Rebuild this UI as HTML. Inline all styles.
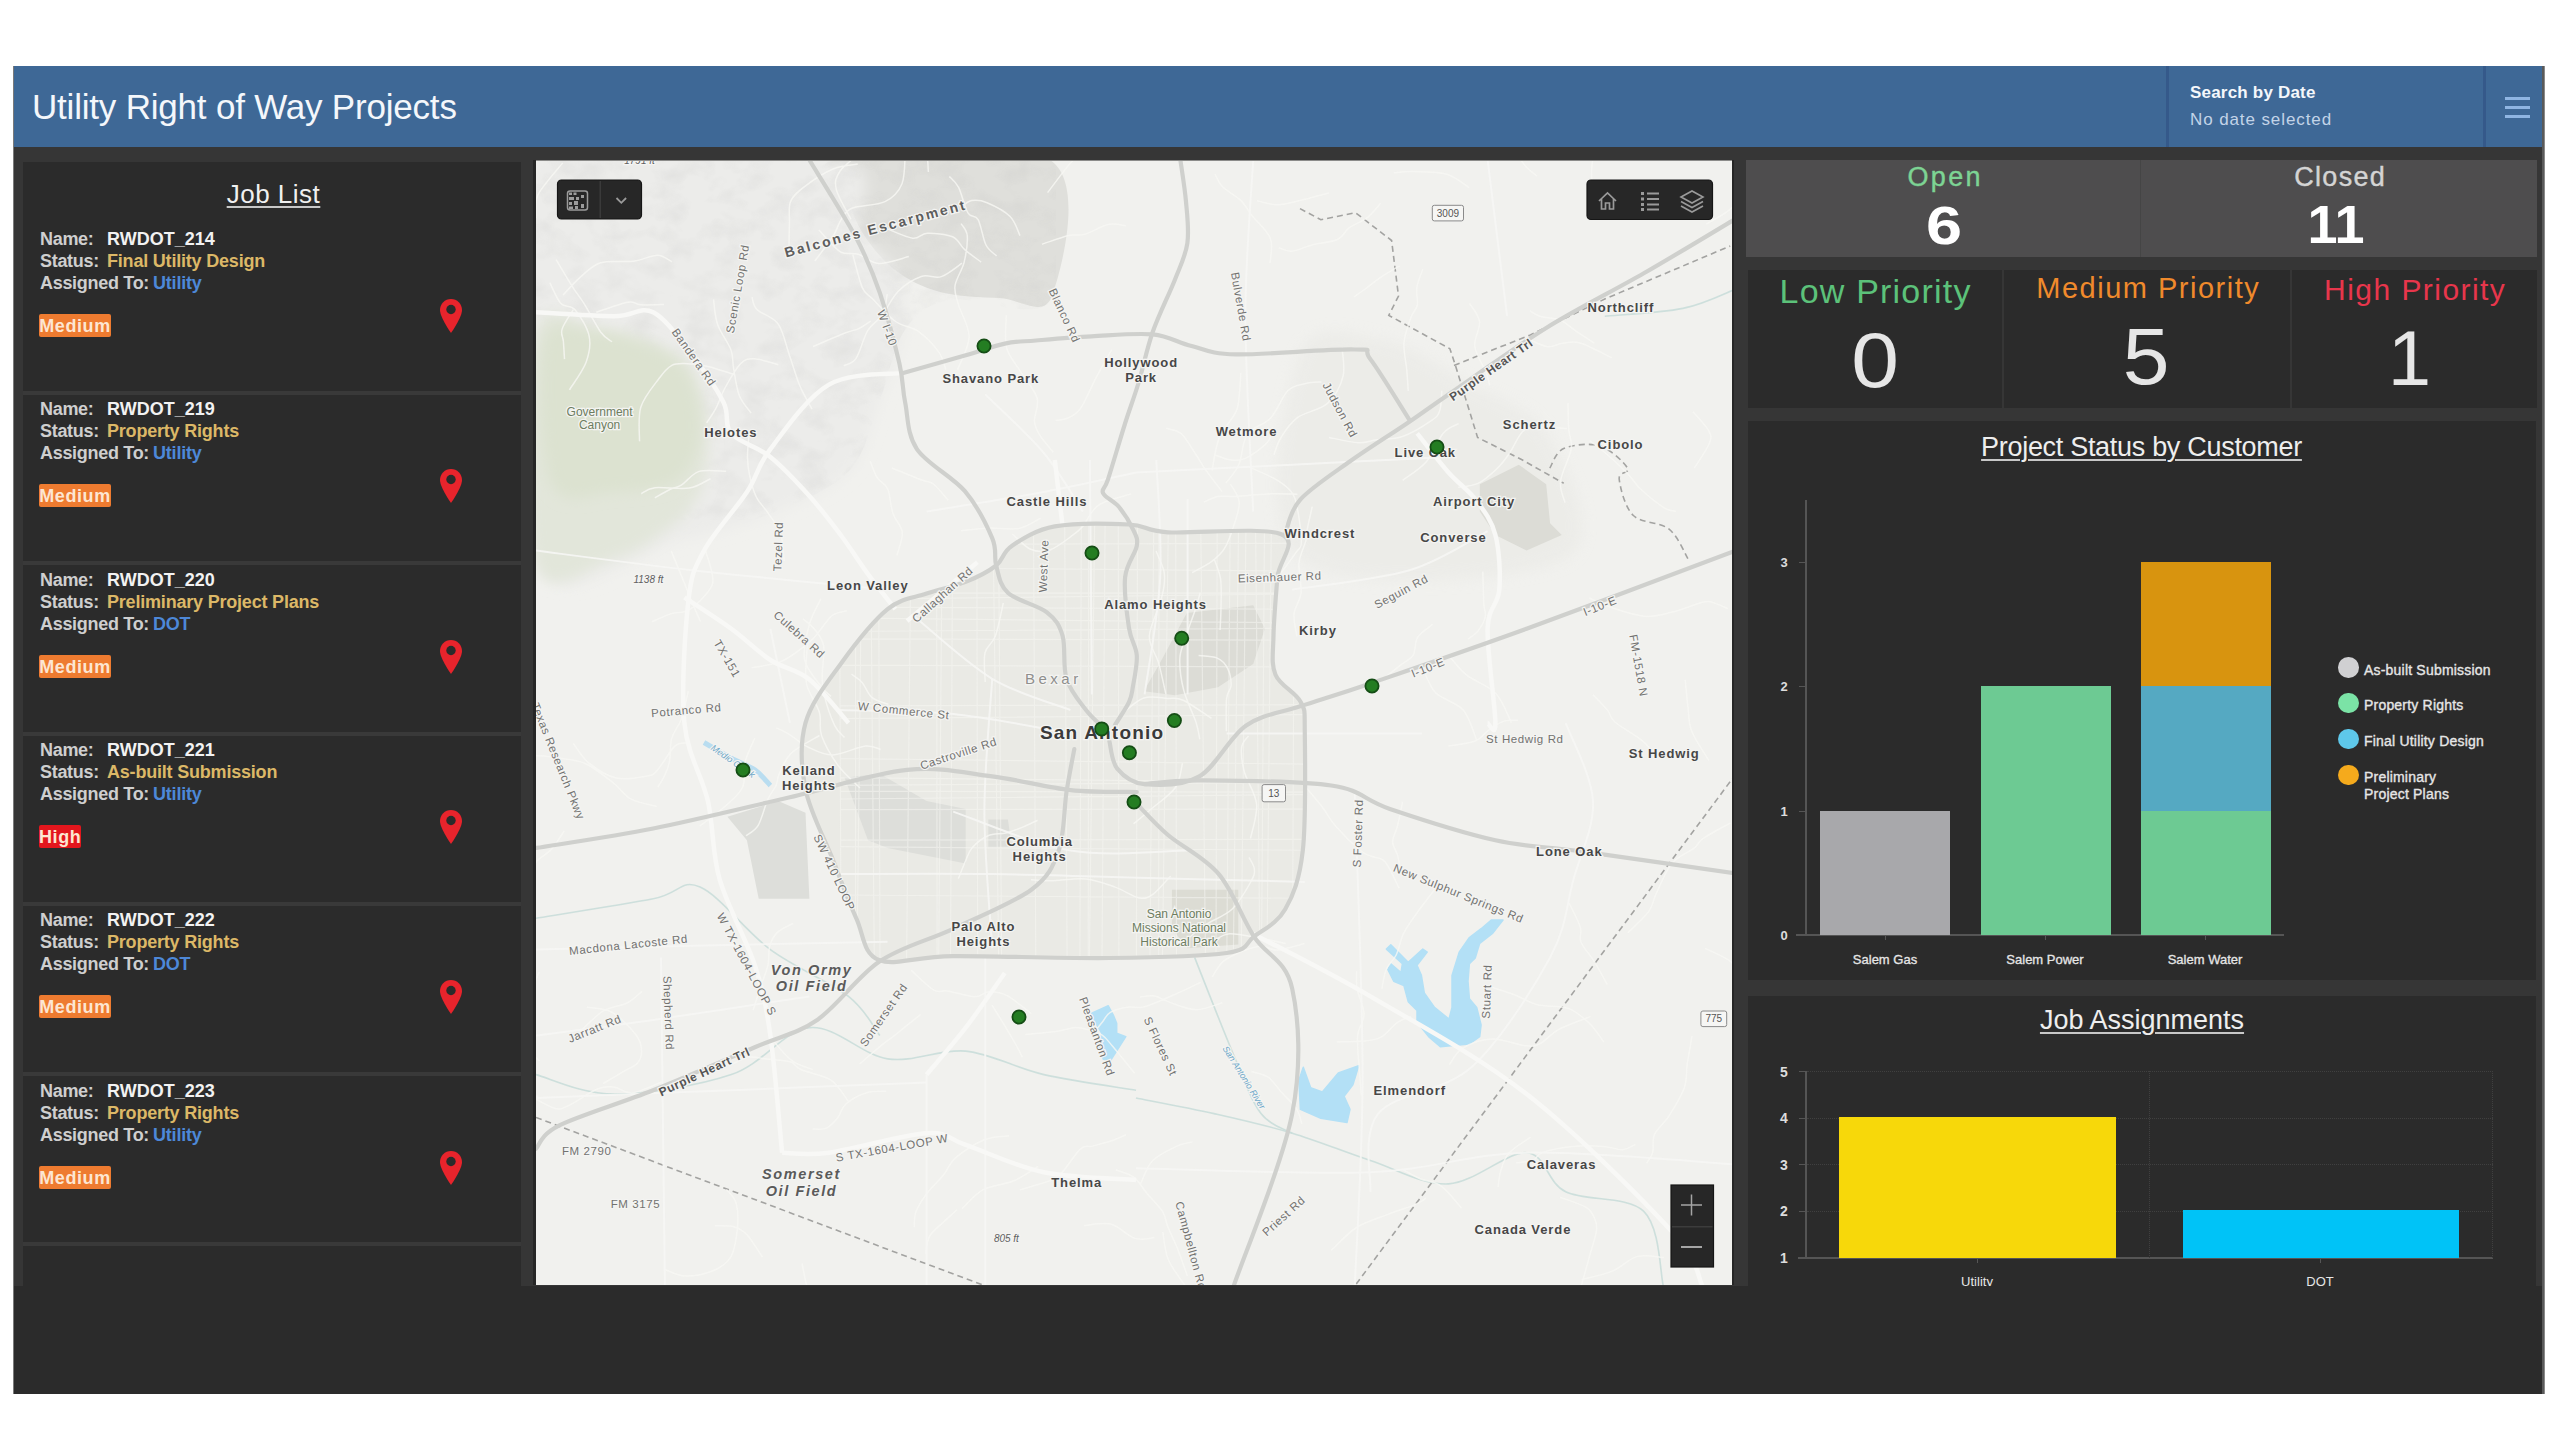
<!DOCTYPE html>
<html><head><meta charset="utf-8"><style>
html,body{margin:0;padding:0;background:#fff;width:2560px;height:1441px;overflow:hidden;position:relative;font-family:"Liberation Sans", sans-serif;}
.t{position:absolute;white-space:nowrap;line-height:1;}
.r{position:absolute;}
.badge{color:#fde6d2;font-size:18px;line-height:24px;text-align:center;font-weight:bold;letter-spacing:0.6px;border-radius:2px;}
u{text-decoration-thickness:1.6px;text-underline-offset:3px;text-decoration-color:#c8c8c8;}
</style></head><body>
<div class="r" style="left:13px;top:66px;width:2532px;height:1328px;background:#363636;"></div><div class="r" style="left:13px;top:66px;width:2532px;height:81px;background:#3e6896;"></div><div class="r" style="left:2166px;top:66px;width:3px;height:81px;background:#35598a;"></div><div class="r" style="left:2483px;top:66px;width:3px;height:81px;background:#35598a;"></div><div class="t" style="left:32px;top:88.9px;font-size:35px;color:#f4f7fb;font-weight:normal;letter-spacing:-0.2px;">Utility Right of Way Projects</div><div class="t" style="left:2190px;top:83.9px;font-size:17px;color:#f4f7fb;font-weight:bold;letter-spacing:0.2px;">Search by Date</div><div class="t" style="left:2190px;top:110.9px;font-size:17px;color:#c3d4e8;font-weight:normal;letter-spacing:0.9px;">No date selected</div><div class="r" style="left:2505px;top:97px;width:25px;height:3px;background:#8fb5e2;"></div><div class="r" style="left:2505px;top:106px;width:25px;height:3px;background:#8fb5e2;"></div><div class="r" style="left:2505px;top:115px;width:25px;height:3px;background:#8fb5e2;"></div><div class="r" style="left:23px;top:162px;width:498px;height:1124px;background:#2b2b2b;"></div><div class="t" style="left:-726.5px;width:2000px;text-align:center;top:181.4px;font-size:26px;color:#f0f0f0;font-weight:normal;letter-spacing:0.5px;"><u>Job List</u></div><div class="t" style="left:40px;top:230.1px;font-size:18px;color:#cfcfcf;font-weight:bold;letter-spacing:-0.3px;">Name:</div><div class="t" style="left:107px;top:230.1px;font-size:18px;color:#f2f2f2;font-weight:bold;letter-spacing:0px;">RWDOT_214</div><div class="t" style="left:40px;top:252.1px;font-size:18px;color:#cfcfcf;font-weight:bold;letter-spacing:-0.3px;">Status:</div><div class="t" style="left:107px;top:252.1px;font-size:18px;color:#dcb867;font-weight:bold;letter-spacing:-0.2px;">Final Utility Design</div><div class="t" style="left:40px;top:274.1px;font-size:18px;color:#cfcfcf;font-weight:bold;letter-spacing:-0.3px;">Assigned To:</div><div class="t" style="left:153px;top:274.1px;font-size:18px;color:#4d88d8;font-weight:bold;letter-spacing:-0.2px;">Utility</div><div class="r badge" style="left:39px;top:314px;width:72px;height:23px;background:#ee7b30;">Medium</div><svg class="r" style="left:439px;top:298.0px" width="24" height="36" viewBox="0 0 24 36"><path d="M12 1C5.9 1 1 5.9 1 12c0 7.5 11 23 11 23s11-15.5 11-23C23 5.9 18.1 1 12 1z" fill="#e8242c"/><circle cx="12" cy="11.5" r="4.7" fill="#2b2b2b"/></svg><div class="r" style="left:23px;top:391px;width:498px;height:4px;background:#393939;"></div><div class="t" style="left:40px;top:400.4px;font-size:18px;color:#cfcfcf;font-weight:bold;letter-spacing:-0.3px;">Name:</div><div class="t" style="left:107px;top:400.4px;font-size:18px;color:#f2f2f2;font-weight:bold;letter-spacing:0px;">RWDOT_219</div><div class="t" style="left:40px;top:422.4px;font-size:18px;color:#cfcfcf;font-weight:bold;letter-spacing:-0.3px;">Status:</div><div class="t" style="left:107px;top:422.4px;font-size:18px;color:#dcb867;font-weight:bold;letter-spacing:-0.2px;">Property Rights</div><div class="t" style="left:40px;top:444.4px;font-size:18px;color:#cfcfcf;font-weight:bold;letter-spacing:-0.3px;">Assigned To:</div><div class="t" style="left:153px;top:444.4px;font-size:18px;color:#4d88d8;font-weight:bold;letter-spacing:-0.2px;">Utility</div><div class="r badge" style="left:39px;top:484px;width:72px;height:23px;background:#ee7b30;">Medium</div><svg class="r" style="left:439px;top:468.3px" width="24" height="36" viewBox="0 0 24 36"><path d="M12 1C5.9 1 1 5.9 1 12c0 7.5 11 23 11 23s11-15.5 11-23C23 5.9 18.1 1 12 1z" fill="#e8242c"/><circle cx="12" cy="11.5" r="4.7" fill="#2b2b2b"/></svg><div class="r" style="left:23px;top:561px;width:498px;height:4px;background:#393939;"></div><div class="t" style="left:40px;top:570.7px;font-size:18px;color:#cfcfcf;font-weight:bold;letter-spacing:-0.3px;">Name:</div><div class="t" style="left:107px;top:570.7px;font-size:18px;color:#f2f2f2;font-weight:bold;letter-spacing:0px;">RWDOT_220</div><div class="t" style="left:40px;top:592.7px;font-size:18px;color:#cfcfcf;font-weight:bold;letter-spacing:-0.3px;">Status:</div><div class="t" style="left:107px;top:592.7px;font-size:18px;color:#dcb867;font-weight:bold;letter-spacing:-0.2px;">Preliminary Project Plans</div><div class="t" style="left:40px;top:614.7px;font-size:18px;color:#cfcfcf;font-weight:bold;letter-spacing:-0.3px;">Assigned To:</div><div class="t" style="left:153px;top:614.7px;font-size:18px;color:#4d88d8;font-weight:bold;letter-spacing:-0.2px;">DOT</div><div class="r badge" style="left:39px;top:655px;width:72px;height:23px;background:#ee7b30;">Medium</div><svg class="r" style="left:439px;top:638.6px" width="24" height="36" viewBox="0 0 24 36"><path d="M12 1C5.9 1 1 5.9 1 12c0 7.5 11 23 11 23s11-15.5 11-23C23 5.9 18.1 1 12 1z" fill="#e8242c"/><circle cx="12" cy="11.5" r="4.7" fill="#2b2b2b"/></svg><div class="r" style="left:23px;top:732px;width:498px;height:4px;background:#393939;"></div><div class="t" style="left:40px;top:741.0px;font-size:18px;color:#cfcfcf;font-weight:bold;letter-spacing:-0.3px;">Name:</div><div class="t" style="left:107px;top:741.0px;font-size:18px;color:#f2f2f2;font-weight:bold;letter-spacing:0px;">RWDOT_221</div><div class="t" style="left:40px;top:763.0px;font-size:18px;color:#cfcfcf;font-weight:bold;letter-spacing:-0.3px;">Status:</div><div class="t" style="left:107px;top:763.0px;font-size:18px;color:#dcb867;font-weight:bold;letter-spacing:-0.2px;">As-built Submission</div><div class="t" style="left:40px;top:785.0px;font-size:18px;color:#cfcfcf;font-weight:bold;letter-spacing:-0.3px;">Assigned To:</div><div class="t" style="left:153px;top:785.0px;font-size:18px;color:#4d88d8;font-weight:bold;letter-spacing:-0.2px;">Utility</div><div class="r badge" style="left:39px;top:825px;width:42px;height:23px;background:#e3161d;">High</div><svg class="r" style="left:439px;top:808.9px" width="24" height="36" viewBox="0 0 24 36"><path d="M12 1C5.9 1 1 5.9 1 12c0 7.5 11 23 11 23s11-15.5 11-23C23 5.9 18.1 1 12 1z" fill="#e8242c"/><circle cx="12" cy="11.5" r="4.7" fill="#2b2b2b"/></svg><div class="r" style="left:23px;top:902px;width:498px;height:4px;background:#393939;"></div><div class="t" style="left:40px;top:911.3px;font-size:18px;color:#cfcfcf;font-weight:bold;letter-spacing:-0.3px;">Name:</div><div class="t" style="left:107px;top:911.3px;font-size:18px;color:#f2f2f2;font-weight:bold;letter-spacing:0px;">RWDOT_222</div><div class="t" style="left:40px;top:933.3px;font-size:18px;color:#cfcfcf;font-weight:bold;letter-spacing:-0.3px;">Status:</div><div class="t" style="left:107px;top:933.3px;font-size:18px;color:#dcb867;font-weight:bold;letter-spacing:-0.2px;">Property Rights</div><div class="t" style="left:40px;top:955.3px;font-size:18px;color:#cfcfcf;font-weight:bold;letter-spacing:-0.3px;">Assigned To:</div><div class="t" style="left:153px;top:955.3px;font-size:18px;color:#4d88d8;font-weight:bold;letter-spacing:-0.2px;">DOT</div><div class="r badge" style="left:39px;top:995px;width:72px;height:23px;background:#ee7b30;">Medium</div><svg class="r" style="left:439px;top:979.2px" width="24" height="36" viewBox="0 0 24 36"><path d="M12 1C5.9 1 1 5.9 1 12c0 7.5 11 23 11 23s11-15.5 11-23C23 5.9 18.1 1 12 1z" fill="#e8242c"/><circle cx="12" cy="11.5" r="4.7" fill="#2b2b2b"/></svg><div class="r" style="left:23px;top:1072px;width:498px;height:4px;background:#393939;"></div><div class="t" style="left:40px;top:1081.6px;font-size:18px;color:#cfcfcf;font-weight:bold;letter-spacing:-0.3px;">Name:</div><div class="t" style="left:107px;top:1081.6px;font-size:18px;color:#f2f2f2;font-weight:bold;letter-spacing:0px;">RWDOT_223</div><div class="t" style="left:40px;top:1103.6px;font-size:18px;color:#cfcfcf;font-weight:bold;letter-spacing:-0.3px;">Status:</div><div class="t" style="left:107px;top:1103.6px;font-size:18px;color:#dcb867;font-weight:bold;letter-spacing:-0.2px;">Property Rights</div><div class="t" style="left:40px;top:1125.6px;font-size:18px;color:#cfcfcf;font-weight:bold;letter-spacing:-0.3px;">Assigned To:</div><div class="t" style="left:153px;top:1125.6px;font-size:18px;color:#4d88d8;font-weight:bold;letter-spacing:-0.2px;">Utility</div><div class="r badge" style="left:39px;top:1166px;width:72px;height:23px;background:#ee7b30;">Medium</div><svg class="r" style="left:439px;top:1149.5px" width="24" height="36" viewBox="0 0 24 36"><path d="M12 1C5.9 1 1 5.9 1 12c0 7.5 11 23 11 23s11-15.5 11-23C23 5.9 18.1 1 12 1z" fill="#e8242c"/><circle cx="12" cy="11.5" r="4.7" fill="#2b2b2b"/></svg><div class="r" style="left:23px;top:1242px;width:498px;height:4px;background:#393939;"></div><svg style="position:absolute;left:536px;top:160px" width="1196" height="1125" viewBox="536 160 1196 1125" font-family="Liberation Sans, sans-serif"><rect x="536" y="160" width="1196" height="1125" fill="#f1f1ee"/><path d="M996.2,565.5 C1003.8,559.5 1002.0,552.4 1011.8,545.9 C1021.5,539.4 1035.2,530.0 1054.8,526.4 C1074.3,522.8 1110.1,523.5 1129.0,524.5 C1147.8,525.4 1142.6,530.6 1168.0,532.3 C1193.4,533.9 1263.1,526.7 1281.3,534.2 C1299.5,541.7 1278.7,560.3 1277.4,577.2 C1276.1,594.1 1273.8,619.5 1273.5,635.8 C1273.2,652.1 1270.9,663.8 1275.5,674.8 C1280.0,685.9 1296.0,692.4 1300.8,702.2 C1305.7,712.0 1304.4,708.7 1304.8,733.4 C1305.1,758.2 1306.1,821.3 1302.8,850.6 C1299.5,879.9 1293.4,894.9 1285.2,909.2 C1277.1,923.5 1263.7,929.3 1254.0,936.6 C1244.2,943.9 1250.7,949.4 1226.6,953.0 C1202.5,956.5 1155.0,957.5 1109.4,958.0 C1063.9,958.6 991.6,955.8 953.2,956.1 C914.8,956.4 895.1,966.3 879.0,960.0 C862.8,953.7 864.0,935.0 856.3,918.3 C848.6,901.6 841.3,881.2 832.9,859.7 C824.4,838.2 810.1,812.2 805.5,789.4 C801.0,766.6 799.7,743.8 805.5,722.9 C811.4,702.0 827.0,682.9 840.7,663.9 C854.4,645.0 873.2,620.9 887.6,609.2 C901.9,597.5 913.6,598.2 926.6,593.6 C939.6,589.0 954.1,586.6 965.7,581.9 C977.3,577.2 988.5,571.5 996.2,565.5Z" fill="#eaeae5"/><path d="M1300.0,354.3 C1313.9,317.7 1355.5,335.8 1383.3,340.4 C1411.0,345.0 1438.8,365.8 1466.5,382.0 C1494.3,398.2 1533.6,407.9 1549.8,437.5 C1566.0,467.2 1605.3,539.5 1563.7,559.9 C1522.0,580.3 1343.9,594.2 1300.0,559.9 C1256.1,525.7 1286.1,390.9 1300.0,354.3Z" fill="#e9e9e5" opacity="0.6" filter="url(#bl6)"/><path d="M838.0,160.0 C872.2,155.0 1014.3,137.3 1050.0,160.0 C1085.7,182.7 1060.3,273.0 1052.0,296.0 C1043.7,319.0 1018.7,298.7 1000.0,298.0 C981.3,297.3 957.5,296.7 940.0,292.0 C922.5,287.3 908.0,280.0 895.0,270.0 C882.0,260.0 870.3,245.3 862.0,232.0 C853.7,218.7 849.0,202.0 845.0,190.0 C841.0,178.0 803.8,165.0 838.0,160.0Z" fill="#dfdfdb"/><defs><filter id="hs" x="0" y="0" width="1" height="1"><feTurbulence type="fractalNoise" baseFrequency="0.035 0.05" numOctaves="3" seed="4"/><feColorMatrix type="matrix" values="0 0 0 0 0.55  0 0 0 0 0.55  0 0 0 0 0.54  0 0 0 -2.2 1.25"/></filter></defs><path d="M536.0,160.0 C586.3,93.3 784.0,148.3 838.0,160.0 C892.0,171.7 849.7,210.8 860.0,230.0 C870.3,249.2 892.5,258.3 900.0,275.0 C907.5,291.7 908.3,309.2 905.0,330.0 C901.7,350.8 889.2,376.7 880.0,400.0 C870.8,423.3 866.7,451.7 850.0,470.0 C833.3,488.3 808.3,498.3 780.0,510.0 C751.7,521.7 720.7,531.7 680.0,540.0 C639.3,548.3 560.0,623.3 536.0,560.0 C512.0,496.7 485.7,226.7 536.0,160.0Z" fill="#ececea" filter="url(#bl6)"/><rect x="536" y="160" width="520" height="360" filter="url(#hs)" opacity="0.2" clip-path="url(#hsclip)"/><clipPath id="hsclip"><path d="M536.0,160.0 C621.7,93.3 964.0,136.7 1050.0,160.0 C1136.0,183.3 1068.7,276.7 1052.0,300.0 C1035.3,323.3 974.5,295.0 950.0,300.0 C925.5,305.0 916.7,313.3 905.0,330.0 C893.3,346.7 889.2,376.7 880.0,400.0 C870.8,423.3 866.7,451.7 850.0,470.0 C833.3,488.3 808.3,498.3 780.0,510.0 C751.7,521.7 720.7,531.7 680.0,540.0 C639.3,548.3 560.0,623.3 536.0,560.0 C512.0,496.7 450.3,226.7 536.0,160.0Z"/></clipPath><filter id="bl6" x="-20%" y="-20%" width="140%" height="140%"><feGaussianBlur stdDeviation="7"/></filter><path d="M536.0,331.9 C545.8,292.2 575.1,326.0 594.6,328.0 C614.1,329.9 636.9,336.4 653.2,343.6 C669.5,350.8 683.1,356.0 692.2,370.9 C701.4,385.9 706.6,413.3 707.9,433.4 C709.2,453.6 707.2,475.8 700.1,492.0 C692.9,508.3 679.2,520.0 664.9,531.1 C650.6,542.2 635.6,552.6 614.1,558.4 C592.6,564.3 549.0,604.0 536.0,566.2 C523.0,528.5 526.2,371.6 536.0,331.9Z" fill="#e2e6da" filter="url(#bl6)"/><path d="M543.8,339.7 C551.0,314.3 576.4,330.6 594.6,331.9 C612.8,333.2 637.6,340.3 653.2,347.5 C668.8,354.7 680.5,360.5 688.3,374.8 C696.2,389.2 702.0,415.9 700.1,433.4 C698.1,451.0 690.9,470.5 676.6,480.3 C662.3,490.1 635.0,491.4 614.1,492.0 C593.3,492.7 563.3,509.6 551.6,484.2 C539.9,458.8 536.7,365.1 543.8,339.7Z" fill="#dce2d0" filter="url(#bl6)"/><path d="M1143.8,691.2 L1159.4,663.9 L1186.8,613.1 L1253.2,605.3 L1264.9,628.8 L1253.2,663.9 L1218.0,687.3 L1175.1,695.2Z" fill="#dcdcd6"/><path d="M1479.8,484.2 L1518.8,464.7 L1546.2,484.2 L1550.1,523.3 L1561.8,535.0 L1526.6,550.6 L1495.4,535.0 L1479.8,511.6Z" fill="#dcdcd6"/><path d="M727.4,816.8 L778.2,801.1 L805.5,812.8 L809.4,898.8 L758.7,898.8 L746.9,840.2Z" fill="#dddeda"/><path d="M844.6,777.7 L879.8,773.8 L926.6,801.1 L965.7,808.9 L965.7,863.6 L887.6,848.0 L868.0,840.2Z" fill="#dddeda"/><path d="M1171.9,889.7 L1238.3,889.7 L1238.3,944.4 L1187.6,948.3 L1171.9,928.8Z" fill="#dcdcd4"/><path d="M988.3,819.4 L1007.9,819.4 L1011.8,846.7 L988.3,846.7Z" fill="#dddeda"/><path d="M1503.0,920.0 L1492.8,933.1 L1479.7,943.3 L1475.3,957.9 L1469.4,963.7 L1468.0,981.2 L1469.4,998.7 L1476.7,1007.4 L1481.1,1024.9 L1479.7,1036.6 L1469.4,1043.9 L1440.3,1046.8 L1428.6,1036.6 L1417.0,1022.0 L1417.0,1010.4 L1408.2,1001.6 L1403.9,985.6 L1393.7,981.2 L1387.8,969.5 L1390.8,963.7 L1401.0,972.5 L1402.4,963.7 L1386.4,949.1 L1390.8,944.8 L1408.2,962.3 L1422.8,949.1 L1427.2,952.1 L1417.0,965.2 L1421.4,975.4 L1424.3,992.9 L1434.5,1007.4 L1449.0,1019.1 L1452.0,1007.4 L1452.0,975.4 L1459.2,952.1 L1469.4,937.5 L1481.1,928.7 L1491.3,920.0Z" fill="#b3e0f6" stroke="#b3e0f6" stroke-width="1.5" stroke-linejoin="round"/><path d="M1303.3,1067.2 L1310.6,1087.6 L1322.3,1092.0 L1338.3,1073.0 L1358.7,1065.7 L1352.9,1084.7 L1344.1,1096.3 L1350.0,1109.4 L1347.0,1122.6 L1320.8,1118.2 L1300.4,1109.4 L1298.9,1080.3Z" fill="#b3e0f6" stroke="#b3e0f6" stroke-width="1.5" stroke-linejoin="round"/><path d="M1091.7,1013.3 L1108.3,1005.8 L1113.3,1015.0 L1116.7,1023.3 L1116.7,1033.3 L1125.8,1036.7 L1118.3,1048.3 L1110.8,1060.0 L1103.3,1059.2 L1099.2,1046.7 L1101.7,1033.3 L1095.0,1021.7Z" fill="#b3e0f6" stroke="#b3e0f6" stroke-width="1.5" stroke-linejoin="round"/><path d="M704.0,742.5 C708.5,745.1 722.8,753.6 731.3,758.2 C739.8,762.7 748.2,765.3 754.8,769.9 C761.3,774.4 767.8,782.9 770.4,785.5" fill="none" stroke="#b9ddf0" stroke-width="5"/><path d="M536.0,1074.6 C549.0,1077.8 581.6,1094.1 614.1,1094.1 C646.7,1094.1 698.8,1085.6 731.3,1074.6 C763.9,1063.5 783.4,1030.3 809.4,1027.7 C835.5,1025.1 861.5,1055.0 887.6,1058.9 C913.6,1062.8 939.6,1048.5 965.7,1051.1 C991.7,1053.7 1015.4,1068.1 1043.8,1074.6 C1072.2,1081.1 1120.6,1087.6 1136.0,1090.2" fill="none" stroke="#c9ddd9" stroke-width="1.6" opacity="0.9"/><path d="M1136.0,1098.0 C1149.0,1100.6 1188.1,1107.8 1214.1,1113.6 C1240.2,1119.5 1266.2,1125.3 1292.2,1133.2 C1318.3,1141.0 1344.3,1152.0 1370.4,1160.5 C1396.4,1169.0 1422.5,1185.2 1448.5,1183.9 C1474.5,1182.6 1507.1,1151.4 1526.6,1152.7 C1546.2,1154.0 1546.2,1182.0 1565.7,1191.8 C1585.2,1201.5 1627.5,1195.6 1643.8,1211.3 C1660.1,1227.0 1660.1,1273.5 1663.3,1285.9" fill="none" stroke="#c9ddd9" stroke-width="1.6" opacity="0.9"/><path d="M1194.6,957.4 C1201.1,973.7 1222.6,1029.0 1233.7,1055.0 C1244.7,1081.1 1251.2,1100.6 1261.0,1113.6 C1270.8,1126.6 1287.0,1129.9 1292.2,1133.2" fill="none" stroke="#c9ddd9" stroke-width="1.6" opacity="0.9"/><path d="M536.0,918.3 C555.5,915.1 625.8,904.0 653.2,898.8 C680.5,893.6 680.5,878.6 700.1,887.1 C719.6,895.5 745.6,931.3 770.4,949.6 C795.1,967.8 830.3,982.1 848.5,996.4 C866.7,1010.8 874.5,1029.0 879.8,1035.5" fill="none" stroke="#c9ddd9" stroke-width="1.6" opacity="0.9"/><path d="M1736.0,288.9 C1727.1,292.2 1704.8,303.9 1682.9,308.4 C1661.0,313.0 1617.8,314.9 1604.8,316.2" fill="none" stroke="#c9ddd9" stroke-width="1.6" opacity="0.9"/><path d="M536.0,1117.5 L985.2,1285.9" fill="none" stroke="#a3a3a1" stroke-width="1.6" stroke-dasharray="6 4"/><path d="M1736.0,773.8 L1354.8,1285.9" fill="none" stroke="#a3a3a1" stroke-width="1.6" stroke-dasharray="6 4"/><path d="M1300.0,208.6 L1320.8,219.7 L1355.5,212.7 L1391.6,240.5 L1398.5,296.0 L1388.8,315.4 L1419.3,332.1 L1449.9,348.7 L1455.4,365.4 L1466.5,401.5 L1477.6,437.5 L1522.0,459.8 L1563.7,483.3" fill="none" stroke="#a3a3a1" stroke-width="1.6" stroke-dasharray="6 4"/><path d="M1549.8,468.1 C1552.1,464.8 1555.3,452.3 1563.7,448.6 C1572.0,444.9 1589.1,442.6 1599.8,445.9 C1610.4,449.1 1624.3,462.5 1627.5,468.1 C1630.7,473.6 1618.3,471.3 1619.2,479.2 C1620.1,487.0 1624.7,506.9 1633.1,515.3 C1641.4,523.6 1659.9,521.7 1669.1,529.1 C1678.4,536.6 1685.3,554.8 1688.6,559.9" fill="none" stroke="#a3a3a1" stroke-width="1.6" stroke-dasharray="6 4"/><path d="M1454.0,365.4 L1530.4,334.9 L1605.3,298.8 L1730.2,246.0" fill="none" stroke="#a3a3a1" stroke-width="1.6" stroke-dasharray="6 4"/><clipPath id="mapclip"><rect x="536" y="160" width="1196" height="1125"/></clipPath><clipPath id="ringclip"><path d="M996.2,565.5 C1003.8,559.5 1002.0,552.4 1011.8,545.9 C1021.5,539.4 1035.2,530.0 1054.8,526.4 C1074.3,522.8 1110.1,523.5 1129.0,524.5 C1147.8,525.4 1142.6,530.6 1168.0,532.3 C1193.4,533.9 1263.1,526.7 1281.3,534.2 C1299.5,541.7 1278.7,560.3 1277.4,577.2 C1276.1,594.1 1273.8,619.5 1273.5,635.8 C1273.2,652.1 1270.9,663.8 1275.5,674.8 C1280.0,685.9 1296.0,692.4 1300.8,702.2 C1305.7,712.0 1304.4,708.7 1304.8,733.4 C1305.1,758.2 1306.1,821.3 1302.8,850.6 C1299.5,879.9 1293.4,894.9 1285.2,909.2 C1277.1,923.5 1263.7,929.3 1254.0,936.6 C1244.2,943.9 1250.7,949.4 1226.6,953.0 C1202.5,956.5 1155.0,957.5 1109.4,958.0 C1063.9,958.6 991.6,955.8 953.2,956.1 C914.8,956.4 895.1,966.3 879.0,960.0 C862.8,953.7 864.0,935.0 856.3,918.3 C848.6,901.6 841.3,881.2 832.9,859.7 C824.4,838.2 810.1,812.2 805.5,789.4 C801.0,766.6 799.7,743.8 805.5,722.9 C811.4,702.0 827.0,682.9 840.7,663.9 C854.4,645.0 873.2,620.9 887.6,609.2 C901.9,597.5 913.6,598.2 926.6,593.6 C939.6,589.0 954.1,586.6 965.7,581.9 C977.3,577.2 988.5,571.5 996.2,565.5Z"/></clipPath><path d="M839.3,520 L841.1,960 M855.5,520 L855.6,960 M862.1,520 L857.0,960 M870.4,520 L874.3,960 M878.5,520 L880.0,960 M911.2,520 L906.6,960 M936.6,520 L937.1,960 M942.3,520 L938.7,960 M952.7,520 L950.5,960 M976.8,520 L977.7,960 M992.9,520 L998.7,960 M998.5,520 L1001.6,960 M1033.5,520 L1035.8,960 M1064.7,520 L1067.1,960 M1081.3,520 L1079.9,960 M1088.7,520 L1088.2,960 M1094.7,520 L1089.4,960 M1105.1,520 L1102.0,960 M1118.3,520 L1118.9,960 M1137.5,520 L1136.4,960 M1153.8,520 L1149.9,960 M1158.9,520 L1158.7,960 M1168.4,520 L1162.4,960 M1175.7,520 L1176.5,960 M1200.7,520 L1205.5,960 M1217.2,520 L1216.0,960 M1230.2,520 L1226.8,960 M1238.6,520 L1233.3,960 M1246.0,520 L1241.2,960 M1255.5,520 L1259.9,960 M1264.5,520 L1261.5,960 M1271.4,520 L1266.9,960 M1294.3,520 L1292.5,960 M1310.6,520 L1316.1,960 M840,520.1 L1310,520.6 M840,544.8 L1310,543.2 M840,567.3 L1310,571.1 M840,593.0 L1310,593.2 M840,599.4 L1310,593.8 M840,607.1 L1310,609.4 M840,617.8 L1310,623.1 M840,631.5 L1310,628.2 M840,638.8 L1310,640.3 M840,665.2 L1310,667.1 M840,705.9 L1310,704.7 M840,718.7 L1310,714.5 M840,758.5 L1310,764.2 M840,777.7 L1310,782.2 M840,785.3 L1310,782.3 M840,791.2 L1310,792.2 M840,799.0 L1310,794.6 M840,809.6 L1310,809.1 M840,840.1 L1310,839.4 M840,846.7 L1310,850.3 M840,895.0 L1310,898.3 M840,982.5 L1310,981.9 M840,990.3 L1310,985.2" stroke="#f6f6f2" stroke-width="1.2" opacity="0.55" fill="none" clip-path="url(#ringclip)"/><path d="M1336.7,1041.9 C1341.2,1041.8 1356.1,1041.9 1363.5,1041.1 C1370.8,1040.3 1375.1,1040.4 1380.9,1037.2 C1386.6,1034.0 1392.8,1025.5 1397.9,1022.1 C1402.9,1018.7 1408.8,1017.7 1411.0,1016.8 M1594.4,343.1 C1591.3,341.1 1581.8,335.0 1576.0,331.1 C1570.3,327.2 1565.6,322.3 1559.7,319.9 C1553.8,317.5 1545.7,318.0 1540.7,316.5 C1535.7,315.0 1531.5,311.7 1529.7,310.7 M1198.6,655.5 C1201.7,655.9 1212.4,656.0 1217.3,658.1 C1222.1,660.2 1225.3,663.9 1227.6,668.4 C1229.9,672.9 1231.2,680.3 1231.1,685.3 C1230.9,690.3 1227.4,690.8 1226.6,698.5 C1225.8,706.2 1226.4,725.9 1226.4,731.3 M753.1,1010.2 C754.4,1006.4 758.0,994.6 760.5,987.0 C763.0,979.5 766.5,971.7 768.0,964.9 C769.5,958.2 768.0,952.0 769.6,946.6 C771.1,941.1 773.5,936.2 777.4,932.4 C781.4,928.5 790.6,924.9 793.2,923.4 M556.1,259.6 C558.9,264.2 567.9,279.7 572.5,286.9 C577.1,294.2 579.1,295.7 583.8,303.2 C588.5,310.7 596.0,325.5 600.6,332.0 C605.3,338.4 610.1,340.1 612.0,341.8 M1166.2,428.2 C1168.7,429.2 1176.3,429.3 1181.4,433.8 C1186.4,438.4 1192.5,449.6 1196.5,455.5 C1200.6,461.5 1201.3,463.6 1205.5,469.6 C1209.8,475.6 1219.3,487.9 1222.0,491.6 M859.5,1064.1 C863.2,1061.0 875.5,1050.0 881.4,1045.3 C887.2,1040.5 887.9,1040.6 894.5,1035.5 C901.0,1030.3 916.2,1018.0 920.6,1014.5 M663.1,1081.3 C658.1,1083.2 640.9,1091.8 632.8,1092.8 C624.7,1093.8 620.4,1087.8 614.5,1087.2 C608.6,1086.6 604.9,1086.0 597.3,1089.0 C589.8,1091.9 576.5,1101.9 569.4,1105.1 C562.2,1108.3 562.1,1110.4 554.5,1108.2 C546.9,1106.0 528.9,1094.9 523.8,1092.2 M1537.0,176.0 C1535.3,174.6 1530.6,171.7 1526.8,167.6 C1523.0,163.4 1519.8,158.4 1514.3,151.0 C1508.8,143.7 1499.4,132.2 1493.8,123.5 C1488.1,114.8 1485.0,104.2 1480.3,99.0 C1475.6,93.8 1468.0,93.3 1465.6,92.2 M857.8,164.1 C853.7,164.9 842.5,165.0 833.6,168.8 C824.8,172.5 811.6,181.2 804.5,186.6 C797.3,192.1 793.1,195.5 790.6,201.4 C788.1,207.3 789.7,214.7 789.5,222.1 C789.2,229.5 789.1,241.7 789.0,245.7 M776.4,727.8 C778.6,729.0 784.8,731.7 790.0,734.8 C795.2,738.0 800.3,743.3 807.4,746.7 C814.5,750.0 822.9,755.0 832.6,754.9 C842.2,754.8 857.4,746.9 865.4,746.0 C873.4,745.1 878.1,748.9 880.6,749.5 M1603.8,1042.0 C1601.4,1039.0 1595.5,1029.1 1589.6,1023.5 C1583.6,1017.9 1576.8,1011.5 1568.1,1008.4 C1559.4,1005.3 1546.1,1007.0 1537.3,1004.8 C1528.6,1002.6 1523.7,998.3 1515.6,995.2 C1507.5,992.1 1493.3,987.9 1488.9,986.4 M1140.6,1183.6 C1142.6,1179.9 1146.4,1167.2 1152.3,1161.0 C1158.1,1154.8 1169.2,1149.8 1175.9,1146.6 C1182.7,1143.4 1189.8,1142.7 1192.6,1141.9 M573.3,309.7 C571.4,313.0 563.7,323.8 562.1,329.1 C560.4,334.4 563.0,336.5 563.4,341.5 C563.8,346.5 564.3,356.1 564.5,359.1 M851.5,674.1 C853.3,675.5 858.8,678.5 862.1,682.4 C865.5,686.3 867.4,693.7 871.8,697.3 C876.2,701.0 885.7,703.2 888.5,704.4 M1408.3,390.9 C1408.0,387.4 1407.5,378.2 1406.8,370.1 C1406.1,362.1 1403.3,351.3 1404.0,342.5 C1404.7,333.7 1408.8,323.6 1411.0,317.3 C1413.2,311.1 1416.3,310.1 1417.3,305.0 C1418.2,300.0 1415.9,293.2 1416.9,287.2 C1417.8,281.2 1421.8,272.2 1422.8,269.2 M1215.0,174.0 C1216.2,176.1 1218.0,182.0 1222.2,186.4 C1226.5,190.8 1235.9,195.6 1240.8,200.4 C1245.7,205.2 1246.8,209.0 1251.8,215.4 C1256.7,221.7 1267.3,230.5 1270.4,238.5 C1273.4,246.4 1270.1,259.0 1270.1,263.1 M908.8,256.6 C903.8,257.7 887.1,263.9 878.7,263.5 C870.3,263.2 864.6,256.1 858.4,254.3 C852.2,252.4 846.5,254.7 841.6,252.5 C836.8,250.4 832.9,245.1 829.1,241.3 C825.3,237.6 820.6,231.8 818.9,229.9 M1162.8,1231.8 C1163.7,1236.4 1164.4,1250.3 1168.3,1259.5 C1172.1,1268.7 1181.8,1280.6 1185.9,1286.9 C1190.1,1293.2 1188.1,1294.5 1193.0,1297.4 C1197.9,1300.2 1208.5,1302.1 1215.3,1303.9 C1222.1,1305.7 1230.8,1307.3 1233.8,1307.9 M704.3,547.0 C705.6,551.6 711.6,568.0 712.4,575.1 C713.3,582.2 713.5,583.8 709.6,589.6 C705.8,595.3 695.9,605.5 689.5,609.6 C683.1,613.6 677.5,611.6 671.2,613.6 C665.0,615.7 655.1,620.4 651.9,621.8 M1730.6,822.8 C1726.0,825.4 1709.1,834.3 1703.0,838.5 C1697.0,842.7 1699.3,844.0 1694.1,848.2 C1688.9,852.3 1678.4,855.6 1672.1,863.1 C1665.8,870.7 1660.1,885.5 1656.2,893.6 C1652.3,901.6 1653.6,904.8 1648.8,911.4 C1644.1,917.9 1631.3,929.3 1627.8,932.8 M1047.6,192.6 C1051.0,188.2 1061.5,173.9 1068.0,165.9 C1074.5,157.9 1083.3,152.8 1086.8,144.4 C1090.4,136.1 1088.9,125.4 1089.4,115.7 C1090.0,106.1 1089.3,94.3 1090.1,86.4 C1090.8,78.5 1095.7,76.4 1094.2,68.3 C1092.7,60.2 1083.2,42.8 1081.0,37.7 M688.3,691.2 C687.1,695.9 684.0,711.4 681.2,719.3 C678.4,727.2 673.7,731.4 671.7,738.4 C669.8,745.5 670.7,755.3 669.5,761.5 C668.4,767.6 666.7,771.1 664.7,775.4 C662.8,779.7 658.9,785.3 657.8,787.2 M1134.7,1073.3 C1131.0,1068.8 1118.0,1052.6 1112.6,1046.3 C1107.2,1039.9 1106.1,1037.9 1102.2,1035.2 C1098.3,1032.5 1093.6,1031.2 1089.1,1029.9 C1084.6,1028.7 1080.5,1027.4 1075.2,1027.6 C1070.0,1027.8 1065.9,1030.1 1057.6,1031.2 C1049.3,1032.4 1030.8,1034.0 1025.4,1034.6 M1432.6,624.4 C1430.1,626.5 1420.9,632.2 1417.6,637.3 C1414.4,642.5 1415.9,650.6 1413.2,655.2 C1410.5,659.7 1406.9,660.2 1401.5,664.4 C1396.1,668.7 1384.2,678.1 1380.7,680.8 M1568.0,403.0 C1568.1,407.4 1568.2,422.2 1568.8,429.8 C1569.3,437.4 1572.5,440.2 1571.2,448.8 C1569.8,457.4 1561.6,472.4 1560.5,481.4 C1559.5,490.4 1564.3,499.2 1565.0,502.7 M1449.4,1064.8 C1451.6,1062.0 1455.3,1052.6 1462.4,1048.3 C1469.6,1044.1 1481.5,1039.5 1492.0,1039.1 C1502.6,1038.7 1517.7,1045.1 1525.7,1045.8 C1533.7,1046.6 1534.5,1046.3 1540.1,1043.6 C1545.7,1040.8 1550.9,1033.7 1559.3,1029.2 C1567.7,1024.7 1585.3,1018.7 1590.5,1016.6 M1399.2,888.3 C1396.9,883.9 1389.8,867.2 1385.2,861.9 C1380.6,856.6 1375.6,858.2 1371.4,856.3 C1367.2,854.4 1365.9,855.3 1360.0,850.3 C1354.1,845.3 1342.1,833.6 1335.8,826.3 C1329.4,819.0 1327.4,813.6 1321.9,806.5 C1316.4,799.4 1306.1,787.6 1302.9,783.8 M654.9,497.9 C657.4,496.5 665.5,491.6 669.9,489.5 C674.3,487.4 676.4,488.1 681.3,485.1 C686.2,482.1 691.8,473.7 699.3,471.4 C706.8,469.1 721.7,471.3 726.1,471.3 M1593.0,694.7 C1595.4,697.3 1604.1,705.9 1607.7,710.4 C1611.3,714.9 1609.0,716.8 1614.6,721.7 C1620.2,726.6 1635.3,735.2 1641.3,739.9 C1647.4,744.6 1649.4,748.2 1651.0,749.9 M808.5,637.4 C808.2,640.6 806.8,649.1 806.5,657.0 C806.2,664.9 804.5,675.5 806.7,684.7 C808.8,693.9 816.9,703.8 819.4,712.3 C821.8,720.8 818.5,726.9 821.6,735.8 C824.8,744.7 832.0,757.1 838.3,765.8 C844.7,774.4 856.3,784.2 859.9,787.9 M812.0,409.1 C810.0,405.2 803.6,394.8 799.8,385.8 C796.1,376.7 793.0,365.2 789.3,354.9 C785.7,344.6 783.5,331.5 778.1,323.9 C772.7,316.4 761.3,313.9 756.9,309.4 C752.6,304.9 752.8,299.1 752.0,297.1 M564.3,830.6 C562.2,833.7 556.3,844.0 551.7,849.1 C547.1,854.2 540.0,857.0 536.7,861.2 C533.4,865.3 532.7,872.0 532.0,874.1 M734.1,374.5 C729.8,373.2 715.8,368.2 708.1,366.4 C700.3,364.6 693.7,363.8 687.6,363.7 C681.6,363.5 676.6,362.8 671.8,365.3 C667.1,367.8 664.1,371.5 659.0,378.5 C653.8,385.5 644.0,396.8 640.8,407.2 C637.6,417.7 639.8,435.7 639.5,441.4 M784.1,561.2 C783.5,556.5 783.2,541.3 780.5,533.2 C777.7,525.1 771.7,518.5 767.6,512.4 C763.6,506.3 759.2,503.0 756.2,496.7 C753.2,490.4 750.9,481.4 749.5,474.8 C748.0,468.2 747.6,463.7 747.5,457.2 C747.4,450.7 748.6,439.5 748.9,435.9 M985.2,682.1 C985.2,677.2 983.3,660.5 985.0,652.9 C986.7,645.2 992.4,644.3 995.4,636.0 C998.5,627.7 1002.0,608.4 1003.3,602.9 M1273.9,454.9 C1275.1,452.0 1277.0,443.7 1281.0,437.5 C1284.9,431.3 1289.6,423.5 1297.4,417.7 C1305.2,412.0 1320.2,410.0 1327.8,403.1 C1335.5,396.1 1340.7,385.3 1343.1,376.1 C1345.4,366.8 1342.2,352.4 1342.0,347.6 M1093.0,1033.4 C1094.6,1031.5 1099.7,1025.3 1102.6,1021.8 C1105.5,1018.3 1106.0,1014.8 1110.3,1012.4 C1114.7,1009.9 1123.0,1008.0 1128.6,1007.1 C1134.2,1006.2 1136.6,1008.9 1144.1,1006.9 C1151.6,1004.9 1164.1,999.1 1173.6,995.0 C1183.0,990.9 1196.2,984.4 1200.8,982.3 M1248.5,735.9 C1247.3,737.8 1242.3,741.4 1241.6,747.5 C1240.9,753.5 1241.9,762.5 1244.4,772.0 C1247.0,781.5 1255.6,793.3 1256.6,804.3 C1257.6,815.4 1251.5,832.8 1250.5,838.5 M852.8,254.6 C854.4,260.1 859.1,280.2 862.3,287.6 C865.6,295.0 866.9,293.1 872.5,298.7 C878.0,304.4 888.1,316.1 895.6,321.5 C903.2,326.9 910.9,326.1 918.0,331.2 C925.2,336.3 934.2,345.7 938.8,352.1 C943.4,358.5 944.7,366.6 945.9,369.5 M870.2,461.1 C871.3,463.8 874.1,472.8 877.0,477.4 C879.9,482.1 884.9,482.8 887.6,488.8 C890.3,494.8 890.5,506.2 893.0,513.5 C895.4,520.8 901.6,525.4 902.3,532.4 C902.9,539.4 897.8,551.6 896.9,555.5 M812.7,1069.5 C809.2,1068.0 798.6,1065.9 791.7,1060.4 C784.7,1055.0 774.8,1042.9 771.1,1036.8 C767.3,1030.8 769.6,1026.2 769.3,1024.0 M887.2,294.1 C886.5,297.5 886.0,308.1 882.7,314.2 C879.4,320.3 872.2,323.4 867.7,330.7 C863.3,338.1 860.1,352.4 856.1,358.3 C852.1,364.1 845.8,364.5 843.8,365.8 M1249.0,857.4 C1249.9,859.4 1254.1,865.2 1254.4,869.3 C1254.7,873.3 1254.6,875.1 1250.9,881.7 C1247.2,888.3 1239.9,901.8 1232.3,909.0 C1224.8,916.1 1212.9,919.9 1205.8,924.6 C1198.6,929.4 1192.2,935.1 1189.5,937.2 M1278.7,247.7 C1280.9,248.3 1286.2,251.6 1291.7,251.2 C1297.2,250.8 1304.2,247.1 1311.9,245.1 C1319.6,243.1 1331.8,242.1 1338.0,239.2 C1344.1,236.3 1344.1,231.6 1349.0,227.9 C1353.9,224.3 1362.3,221.4 1367.6,217.3 C1372.8,213.2 1378.3,205.6 1380.5,203.3 M1676.0,511.4 C1674.0,510.8 1670.1,511.5 1664.1,507.8 C1658.2,504.0 1646.5,494.7 1640.3,488.8 C1634.1,483.0 1633.2,479.2 1626.8,472.8 C1620.4,466.3 1608.2,455.4 1601.9,450.0 C1595.7,444.7 1591.6,442.2 1589.5,440.6 M671.8,261.8 C669.4,260.7 663.9,255.3 657.5,255.2 C651.1,255.1 643.0,259.9 633.6,261.2 C624.1,262.4 609.7,259.9 600.7,262.8 C591.6,265.6 585.6,272.7 579.3,278.1 C573.0,283.5 565.7,292.3 563.0,295.1 M710.5,478.7 C706.9,480.3 698.4,486.6 689.2,488.1 C679.9,489.6 662.9,486.8 654.9,487.7 C647.0,488.6 643.5,492.7 641.3,493.7 M1663.9,1257.5 C1659.5,1257.3 1645.8,1254.1 1637.3,1256.4 C1628.8,1258.6 1622.2,1267.0 1612.9,1270.9 C1603.6,1274.8 1586.8,1278.2 1581.6,1279.7 M1301.8,1123.7 C1300.9,1121.1 1299.6,1113.6 1296.3,1108.4 C1293.0,1103.3 1286.6,1098.0 1281.9,1092.8 C1277.2,1087.6 1273.3,1080.7 1268.2,1077.2 C1263.1,1073.6 1254.2,1072.5 1251.4,1071.5 M1403.0,1169.5 C1405.8,1171.0 1413.7,1175.9 1420.1,1178.7 C1426.5,1181.5 1434.4,1181.2 1441.3,1186.1 C1448.2,1191.1 1458.2,1204.5 1461.5,1208.2 M1312.2,506.7 C1311.4,510.4 1308.5,522.8 1307.4,528.5 C1306.4,534.2 1307.2,535.1 1305.8,540.9 C1304.4,546.7 1299.7,554.5 1299.0,563.2 C1298.2,571.8 1301.9,584.2 1301.1,592.6 C1300.3,601.1 1294.7,606.7 1294.0,614.0 C1293.4,621.4 1296.5,632.9 1297.0,636.7 M664.1,304.5 C660.1,304.6 646.5,305.2 640.5,304.8 C634.4,304.4 635.2,300.9 627.8,302.2 C620.4,303.4 601.5,310.6 596.2,312.3 M911.2,970.4 C915.0,973.7 927.8,986.8 933.9,990.2 C939.9,993.6 940.6,989.8 947.4,990.9 C954.2,992.0 967.8,996.6 974.7,996.8 C981.6,996.9 983.5,992.0 988.9,991.8 C994.3,991.6 1000.0,992.0 1007.1,995.6 C1014.2,999.3 1027.3,1010.7 1031.4,1013.7 M1356.6,971.2 C1356.7,974.2 1355.8,981.9 1357.1,989.0 C1358.3,996.2 1364.1,1006.4 1364.1,1014.1 C1364.2,1021.9 1358.4,1026.4 1357.6,1035.7 C1356.8,1045.0 1358.7,1059.9 1359.4,1069.8 C1360.0,1079.8 1361.0,1091.1 1361.4,1095.4 M1272.6,427.1 C1271.7,429.6 1272.1,436.7 1267.6,442.0 C1263.1,447.2 1251.7,455.4 1245.4,458.4 C1239.0,461.4 1234.5,460.3 1229.5,459.7 C1224.6,459.2 1217.9,455.9 1215.6,455.2 M1170.7,875.9 C1167.8,878.9 1158.4,890.4 1153.2,894.1 C1147.9,897.8 1145.6,899.1 1139.3,897.9 C1132.9,896.8 1124.0,890.3 1115.1,887.1 C1106.2,883.9 1096.5,879.9 1085.9,878.9 C1075.2,877.8 1060.3,880.7 1051.2,880.8 C1042.0,880.9 1034.3,879.9 1030.9,879.7 M1450.5,657.6 C1453.2,660.5 1459.2,669.2 1466.7,675.1 C1474.2,681.1 1488.2,685.3 1495.7,693.3 C1503.2,701.2 1508.8,717.8 1511.5,722.7 M1607.3,984.7 C1605.2,980.9 1598.9,968.9 1594.5,961.8 C1590.2,954.7 1583.4,948.0 1581.0,942.2 C1578.6,936.5 1582.3,933.8 1580.3,927.2 C1578.3,920.6 1570.8,906.8 1568.9,902.7 M562.7,162.9 C560.1,166.1 551.5,175.9 547.2,181.6 C542.9,187.4 538.8,191.5 536.9,197.6 C535.1,203.6 536.0,214.6 535.8,218.0 M1526.9,338.5 C1530.3,339.8 1541.7,345.9 1547.6,346.7 C1553.6,347.5 1557.0,343.8 1562.6,343.2 C1568.1,342.6 1572.5,340.8 1580.8,343.2 C1589.0,345.6 1606.6,355.3 1611.8,357.7 M603.1,1083.5 C606.6,1081.5 618.0,1074.7 623.7,1071.4 C629.4,1068.0 634.3,1066.7 637.3,1063.2 C640.2,1059.7 641.8,1055.2 641.6,1050.5 C641.4,1045.9 641.1,1041.5 636.3,1035.2 C631.4,1028.8 620.6,1017.2 612.3,1012.5 C604.1,1007.8 591.0,1008.1 586.8,1007.2 M1321.5,381.9 C1318.9,382.2 1311.2,382.2 1305.6,383.6 C1300.0,385.1 1293.8,384.8 1288.0,390.5 C1282.2,396.2 1277.4,410.7 1270.6,417.9 C1263.8,425.2 1252.6,426.5 1247.3,434.2 C1242.0,442.0 1242.5,456.4 1238.9,464.5 C1235.3,472.7 1228.0,480.0 1225.9,483.1 M1423.1,669.0 C1425.2,673.0 1429.0,685.9 1435.6,692.8 C1442.3,699.6 1456.3,702.0 1463.2,710.0 C1470.1,718.0 1474.6,735.6 1476.9,740.8 M850.9,219.1 C848.5,214.1 838.1,197.4 836.3,189.4 C834.5,181.4 835.6,177.8 840.1,171.0 C844.6,164.2 858.8,156.0 863.5,148.4 C868.3,140.8 869.2,134.5 868.8,125.3 C868.3,116.1 861.6,101.4 861.0,93.4 C860.4,85.4 864.3,79.9 864.9,77.2 M726.4,1189.3 C728.0,1191.7 734.5,1196.9 736.3,1203.7 C738.1,1210.5 738.2,1221.4 737.2,1230.2 C736.3,1239.1 734.9,1250.0 730.9,1256.8 C726.8,1263.5 720.5,1267.6 712.9,1270.8 C705.3,1274.0 693.5,1276.3 685.4,1276.1 C677.3,1275.8 667.9,1270.4 664.4,1269.3 M1402.6,801.6 C1401.8,805.8 1399.0,819.8 1397.3,826.5 C1395.6,833.2 1392.5,836.9 1392.6,841.8 C1392.6,846.6 1396.3,850.6 1397.6,855.4 C1398.9,860.3 1399.9,868.3 1400.4,870.9 M1705.0,948.3 C1708.9,950.3 1721.2,955.0 1728.8,960.2 C1736.3,965.5 1742.3,975.9 1750.1,979.7 C1757.9,983.5 1766.1,982.8 1775.5,983.1 C1784.9,983.3 1801.1,981.5 1806.2,981.2 M1516.2,1162.7 C1519.0,1162.3 1528.4,1162.1 1532.8,1160.4 C1537.2,1158.7 1536.1,1154.7 1542.7,1152.4 C1549.4,1150.1 1562.7,1147.5 1572.8,1146.5 C1583.0,1145.5 1595.6,1145.9 1603.8,1146.4 C1612.0,1146.9 1616.9,1150.1 1622.1,1149.7 C1627.4,1149.4 1633.2,1145.3 1635.4,1144.4 M1441.8,390.6 C1441.5,393.9 1441.5,405.6 1439.8,410.6 C1438.1,415.6 1437.6,416.3 1431.3,420.6 C1425.1,424.9 1411.6,433.3 1402.5,436.5 C1393.4,439.7 1384.2,438.8 1376.9,439.8 C1369.5,440.9 1366.5,443.2 1358.5,442.8 C1350.5,442.4 1333.8,438.3 1328.9,437.4 M573.4,743.5 C575.9,746.6 581.3,756.8 588.4,762.6 C595.6,768.4 606.5,775.8 616.3,778.1 C626.0,780.3 640.2,777.4 647.1,776.1 C653.9,774.7 652.8,775.0 657.5,770.0 C662.1,765.0 669.9,750.6 674.8,746.1 C679.6,741.6 684.5,743.3 686.4,742.8 M1123.0,712.9 C1126.5,710.4 1136.4,700.4 1143.8,698.0 C1151.3,695.5 1161.1,698.0 1167.7,698.4 C1174.2,698.8 1175.9,697.0 1183.2,700.3 C1190.5,703.7 1206.8,715.4 1211.5,718.4 M812.9,346.5 C818.3,344.3 837.3,336.0 845.0,333.0 C852.6,330.0 854.4,330.6 858.7,328.6 C863.0,326.6 868.7,322.3 870.7,321.1 M1646.5,1163.3 C1647.5,1161.5 1651.3,1157.2 1652.7,1152.4 C1654.0,1147.5 1651.8,1140.5 1654.5,1134.4 C1657.2,1128.3 1664.0,1123.7 1669.0,1115.9 C1674.0,1108.0 1681.4,1095.9 1684.4,1087.4 C1687.4,1078.9 1685.9,1073.6 1687.1,1065.0 C1688.4,1056.4 1691.2,1040.9 1692.0,1036.0 M1436.6,887.1 C1433.4,891.3 1422.7,904.9 1417.3,912.5 C1411.8,920.2 1407.2,926.2 1403.7,933.2 C1400.2,940.3 1399.2,948.6 1396.3,954.7 C1393.4,960.7 1388.6,963.8 1386.2,969.5 C1383.8,975.1 1382.7,985.5 1381.9,988.7 M1304.7,943.6 C1300.1,944.7 1284.3,949.6 1277.2,950.0 C1270.2,950.5 1267.6,946.1 1262.2,946.2 C1256.8,946.2 1251.4,947.7 1244.9,950.2 C1238.5,952.7 1229.0,956.7 1223.6,961.1 C1218.1,965.6 1214.1,974.4 1212.2,977.0 M762.4,1257.0 C759.8,1253.3 751.8,1239.8 747.0,1234.7 C742.2,1229.6 739.1,1228.2 733.7,1226.7 C728.4,1225.2 717.9,1226.0 714.8,1225.8 M891.7,468.0 C896.7,470.0 914.8,477.4 921.8,480.0 C928.7,482.7 929.0,480.7 933.4,484.0 C937.8,487.4 945.8,497.5 948.3,500.2 M802.1,1263.5 C803.0,1267.7 804.9,1280.0 807.5,1288.8 C810.0,1297.6 816.5,1308.0 817.3,1316.1 C818.1,1324.2 813.2,1333.9 812.4,1337.5 M1222.5,1002.7 C1218.1,1003.9 1205.0,1009.7 1196.4,1009.7 C1187.7,1009.7 1177.5,1004.9 1170.6,1002.6 C1163.6,1000.3 1159.7,997.0 1154.6,996.1 C1149.5,995.2 1142.2,996.9 1139.8,997.0 M1053.3,452.3 C1051.1,449.5 1043.3,440.9 1040.1,435.7 C1037.0,430.5 1034.9,427.4 1034.4,421.2 C1033.9,414.9 1039.5,406.5 1037.1,398.2 C1034.8,389.9 1025.4,379.6 1020.3,371.2 C1015.3,362.8 1008.9,357.1 1006.6,347.8 C1004.2,338.4 1006.3,320.6 1006.3,315.2 M928.4,172.0 C927.8,167.9 928.5,155.8 925.1,147.7 C921.7,139.5 910.8,131.1 908.0,123.1 C905.2,115.0 908.2,103.1 908.2,99.1 M656.9,806.4 C652.6,805.2 638.4,803.0 631.2,799.1 C623.9,795.2 621.0,788.9 613.4,783.0 C605.8,777.1 594.8,767.8 585.7,763.7 C576.5,759.5 568.0,759.3 558.5,758.1 C549.1,756.9 539.1,754.1 529.0,756.5 C519.0,758.9 503.4,769.7 498.2,772.3 M961.1,223.7 C962.2,225.7 966.8,229.6 967.3,236.0 C967.7,242.4 966.1,253.9 964.1,262.3 C962.0,270.6 955.9,278.9 955.0,285.9 C954.1,293.0 956.1,296.1 958.4,304.6 C960.8,313.1 969.3,325.9 969.1,336.8 C969.0,347.6 959.5,364.2 957.5,369.7 M1685.2,679.9 C1685.6,684.3 1686.9,697.8 1687.9,706.3 C1689.0,714.8 1688.1,722.0 1691.6,731.0 C1695.1,740.0 1706.0,755.5 1708.9,760.5 M958.3,878.6 C959.5,875.7 963.2,866.4 965.4,861.3 C967.7,856.1 968.2,852.2 972.0,847.9 C975.7,843.6 982.4,838.2 988.0,835.7 C993.7,833.2 1000.2,834.3 1006.0,832.9 C1011.7,831.4 1017.5,829.2 1022.8,827.1 C1028.1,825.0 1035.1,821.3 1037.6,820.2 M539.2,972.0 C537.9,975.0 534.4,982.7 531.5,989.8 C528.5,996.8 522.1,1004.7 521.4,1014.1 C520.8,1023.5 524.6,1038.3 527.6,1046.2 C530.6,1054.0 537.4,1058.5 539.4,1061.0 M996.6,255.9 C994.8,254.1 989.1,251.0 986.0,245.0 C982.9,238.9 981.1,225.0 978.1,219.6 C975.1,214.3 971.1,218.2 967.9,212.8 C964.6,207.5 961.7,193.5 958.6,187.4 C955.5,181.3 950.9,178.2 949.3,176.4 M706.7,422.8 C708.2,420.5 712.5,414.7 715.7,408.7 C718.9,402.6 721.5,394.1 725.8,386.5 C730.0,379.0 736.3,367.9 741.0,363.3 C745.8,358.7 748.2,358.6 754.4,358.8 C760.6,359.1 774.3,363.7 778.3,364.7 M1297.4,494.2 C1292.5,494.1 1278.5,493.6 1268.3,493.9 C1258.1,494.3 1244.5,496.0 1236.1,496.4 C1227.7,496.9 1223.4,495.5 1218.0,496.5 C1212.6,497.4 1206.2,501.1 1203.9,502.0 M1125.7,225.8 C1122.8,225.5 1115.0,223.0 1108.1,224.5 C1101.2,225.9 1090.9,232.6 1084.3,234.4 C1077.7,236.2 1075.7,233.8 1068.6,235.5 C1061.6,237.1 1046.5,242.8 1042.0,244.2 M1131.1,493.9 C1125.8,495.8 1106.9,499.6 1098.9,504.9 C1090.8,510.3 1087.0,521.2 1082.8,526.2 C1078.5,531.1 1078.8,530.7 1073.4,534.7 C1068.0,538.6 1057.3,547.4 1050.2,549.8 C1043.1,552.3 1036.9,552.0 1030.6,549.3 C1024.3,546.7 1015.5,536.6 1012.4,534.0 M1115.7,1169.8 C1118.7,1171.0 1128.8,1173.3 1134.0,1177.3 C1139.2,1181.2 1142.0,1187.5 1146.8,1193.2 C1151.5,1198.9 1159.0,1205.7 1162.5,1211.4 C1166.0,1217.1 1165.6,1221.4 1168.0,1227.3 C1170.4,1233.3 1173.7,1239.0 1176.9,1247.1 C1180.2,1255.3 1185.7,1271.4 1187.5,1276.3 M886.3,1091.2 C883.0,1091.5 873.2,1090.7 866.4,1092.8 C859.7,1095.0 850.8,1099.8 845.9,1104.0 C841.1,1108.2 840.8,1114.1 837.5,1118.1 C834.3,1122.1 830.6,1126.3 826.4,1128.1 C822.3,1129.9 814.8,1128.9 812.5,1129.1 M1727.8,608.7 C1725.8,607.9 1719.7,604.7 1715.7,603.6 C1711.7,602.4 1711.0,600.6 1703.7,602.0 C1696.4,603.5 1681.8,609.8 1672.1,612.1 C1662.3,614.5 1655.0,617.0 1645.3,616.4 C1635.5,615.7 1622.7,611.4 1613.3,608.3 C1604.0,605.2 1593.3,599.7 1589.3,598.0 M1285.7,943.5 C1281.2,942.5 1268.2,939.6 1258.9,938.0 C1249.6,936.3 1237.0,933.3 1229.6,933.7 C1222.3,934.1 1217.3,939.2 1214.8,940.2 M580.2,1031.4 C584.1,1027.9 595.6,1015.6 603.4,1010.9 C611.2,1006.2 620.6,1006.2 627.0,1003.0 C633.5,999.7 639.5,993.3 642.0,991.3 M1040.5,518.3 C1036.8,520.0 1027.3,526.9 1018.7,528.5 C1010.1,530.1 998.5,527.7 988.9,528.0 C979.3,528.4 965.7,530.2 961.1,530.7 M1020.0,235.6 C1018.3,232.4 1015.6,222.0 1010.1,216.5 C1004.7,211.0 993.5,205.4 987.1,202.7 C980.7,200.1 976.1,199.9 971.8,200.6 C967.5,201.3 963.1,205.8 961.4,206.9 M1353.8,296.9 C1355.8,295.5 1361.5,291.7 1365.9,288.5 C1370.4,285.2 1375.0,281.2 1380.6,277.4 C1386.2,273.7 1396.5,267.7 1399.7,265.8 M1426.1,1198.2 C1424.1,1199.3 1420.4,1202.4 1414.0,1205.1 C1407.5,1207.8 1396.9,1210.8 1387.3,1214.6 C1377.7,1218.3 1365.8,1221.5 1356.5,1227.5 C1347.1,1233.5 1335.4,1246.7 1331.2,1250.5 M1393.8,172.8 C1397.0,172.6 1404.1,171.4 1412.9,171.6 C1421.8,171.9 1437.5,171.6 1446.9,174.2 C1456.2,176.9 1465.4,185.5 1469.1,187.8 M914.3,1227.4 C914.5,1224.8 913.9,1217.6 915.9,1212.1 C917.9,1206.6 921.5,1200.7 926.1,1194.5 C930.7,1188.3 938.8,1180.8 943.7,1174.7 C948.6,1168.6 948.9,1163.4 955.7,1157.6 C962.5,1151.8 975.4,1143.4 984.3,1139.8 C993.2,1136.1 1004.9,1136.4 1009.0,1135.8 M885.7,228.2 C890.2,229.9 905.7,237.3 912.6,238.2 C919.5,239.0 920.6,233.4 927.3,233.2 C933.9,233.0 946.2,234.1 952.5,236.8 C958.7,239.5 959.9,245.3 964.7,249.6 C969.5,253.8 978.4,260.0 981.1,262.1 M1458.6,423.6 C1456.1,425.2 1448.6,426.9 1443.2,433.2 C1437.8,439.6 1433.1,453.9 1426.3,461.8 C1419.6,469.6 1406.7,477.3 1402.7,480.3 M881.1,318.3 C883.9,313.8 891.3,298.6 898.0,291.6 C904.7,284.7 914.1,279.0 921.3,276.5 C928.5,274.0 934.5,278.9 941.3,276.6 C948.1,274.4 958.6,265.4 962.0,263.2 M1489.7,385.5 C1489.1,383.3 1488.6,379.1 1486.2,372.6 C1483.7,366.2 1476.0,355.2 1474.8,346.7 C1473.7,338.2 1480.4,328.9 1479.5,321.6 C1478.6,314.4 1471.2,306.4 1469.5,303.4 M1182.5,763.2 C1181.3,767.2 1180.6,779.8 1175.4,787.5 C1170.1,795.1 1158.2,803.0 1151.2,809.0 C1144.3,815.1 1136.6,821.3 1133.6,823.8 M1240.8,372.8 C1240.6,375.9 1240.4,385.0 1239.6,391.4 C1238.8,397.8 1239.5,403.6 1236.1,411.4 C1232.7,419.2 1223.1,428.3 1219.1,438.1 C1215.1,448.0 1213.3,465.2 1212.1,470.6 M1125.9,1134.7 C1123.6,1135.7 1117.2,1138.9 1111.6,1140.8 C1106.0,1142.7 1097.6,1144.7 1092.4,1146.1 C1087.2,1147.5 1085.9,1144.0 1080.3,1149.1 C1074.6,1154.1 1065.7,1170.2 1058.5,1176.2 C1051.3,1182.1 1043.4,1182.5 1037.0,1184.8 C1030.5,1187.1 1022.6,1189.0 1019.7,1189.9 M1467.9,639.2 C1469.6,637.8 1475.0,634.8 1477.9,631.1 C1480.8,627.3 1484.3,621.3 1485.3,616.7 C1486.2,612.1 1484.2,611.1 1483.8,603.6 C1483.4,596.1 1483.0,576.9 1482.8,571.6 M1084.1,1225.6 C1088.5,1225.3 1102.3,1221.9 1110.8,1224.1 C1119.3,1226.2 1127.8,1236.2 1135.1,1238.4 C1142.4,1240.7 1151.2,1237.7 1154.4,1237.6 M814.9,261.0 C818.0,256.8 829.1,242.4 833.5,235.5 C837.8,228.6 837.9,224.4 841.0,219.8 C844.1,215.3 844.7,211.2 852.0,208.2 C859.3,205.2 876.7,205.8 885.0,201.7 C893.3,197.6 898.6,192.3 902.0,183.8 C905.4,175.3 904.7,156.3 905.3,150.8 M844.5,737.5 C842.8,735.5 838.2,732.9 834.7,725.7 C831.3,718.4 825.9,702.3 823.8,693.9 C821.7,685.4 822.3,683.1 822.2,675.1 C822.2,667.0 824.9,653.4 823.6,645.7 C822.2,637.9 817.6,633.1 814.1,628.7 C810.7,624.2 804.8,620.5 803.0,618.8 M1111.7,349.6 C1109.0,354.4 1100.9,368.4 1095.8,378.1 C1090.8,387.7 1085.6,401.0 1081.1,407.6 C1076.7,414.2 1073.3,415.4 1069.1,417.5 C1064.8,419.7 1057.9,420.1 1055.6,420.6 M1275.9,579.7 C1279.2,575.3 1291.4,559.3 1295.7,552.9 C1299.9,546.6 1301.1,549.4 1301.4,541.8 C1301.6,534.3 1299.0,516.1 1297.2,507.7 C1295.5,499.3 1294.7,496.3 1291.0,491.5 C1287.3,486.7 1282.0,483.0 1274.9,478.9 C1267.8,474.8 1253.0,468.9 1248.6,466.9 M751.6,667.8 C754.5,667.3 764.0,665.9 769.4,664.6 C774.9,663.3 777.6,663.8 784.3,660.0 C791.0,656.2 803.8,646.8 809.8,641.8 C815.8,636.8 816.4,634.3 820.2,629.9 C824.0,625.4 828.3,618.3 832.7,615.2 C837.2,612.0 844.4,611.6 846.7,610.8 M1706.4,224.0 C1710.8,221.1 1726.1,214.2 1732.6,207.0 C1739.2,199.8 1740.2,186.7 1745.7,180.7 C1751.2,174.7 1760.1,174.8 1765.5,171.1 C1770.8,167.5 1775.8,160.9 1777.8,158.8 M820.8,598.9 C818.9,603.3 811.8,615.0 809.1,625.1 C806.4,635.2 802.7,649.3 804.5,659.3 C806.4,669.4 816.0,679.3 820.4,685.4 C824.8,691.6 829.2,694.6 831.0,696.4 M538.3,1096.3 C536.1,1096.3 530.6,1096.1 525.4,1096.6 C520.2,1097.2 514.6,1096.1 507.2,1099.5 C499.9,1103.0 488.1,1112.8 481.4,1117.3 C474.6,1121.9 469.3,1125.1 466.8,1126.7 M746.1,835.7 C748.1,834.0 754.6,831.3 758.2,825.3 C761.8,819.3 764.7,806.2 767.7,799.6 C770.7,792.9 774.1,789.8 776.1,785.4 C778.0,781.1 776.7,779.0 779.3,773.6 C781.8,768.2 784.7,759.4 791.5,753.0 C798.2,746.7 814.8,738.4 819.5,735.5 M1156.1,551.1 C1157.4,554.4 1162.6,565.2 1163.9,571.0 C1165.2,576.9 1164.6,580.7 1164.0,586.1 C1163.3,591.5 1162.5,595.0 1160.0,603.4 C1157.6,611.7 1149.6,626.4 1149.3,636.3 C1149.1,646.3 1155.8,653.3 1158.6,662.9 C1161.3,672.5 1164.6,688.7 1165.8,693.8 M962.0,1208.6 C965.5,1205.5 974.6,1194.4 983.2,1189.7 C991.8,1185.1 1004.7,1184.7 1013.8,1180.8 C1023.0,1176.9 1034.2,1168.7 1038.2,1166.3 M992.1,1005.2 C994.2,1008.6 1000.3,1018.4 1004.4,1025.2 C1008.5,1032.0 1013.6,1040.7 1016.6,1046.0 C1019.7,1051.3 1021.4,1055.2 1022.4,1057.1 M1693.0,411.7 C1695.7,414.9 1706.0,425.5 1708.8,430.8 C1711.5,436.1 1711.8,437.0 1709.4,443.2 C1707.0,449.4 1696.9,463.9 1694.3,468.0 M848.7,1102.0 C845.7,1098.3 839.0,1085.5 831.0,1080.1 C823.0,1074.7 807.5,1072.6 800.8,1069.5 C794.0,1066.5 795.9,1063.5 790.3,1061.8 C784.7,1060.0 774.0,1059.9 767.1,1059.1 C760.2,1058.4 755.1,1056.0 748.8,1057.1 C742.5,1058.2 732.5,1064.3 729.3,1065.7 M699.8,825.8 C702.8,823.5 711.0,818.5 718.0,812.3 C725.0,806.1 737.5,796.9 742.0,788.5 C746.5,780.2 742.9,770.5 745.1,762.1 C747.2,753.7 753.1,742.2 754.8,738.3 M1256.9,200.7 C1260.2,201.4 1269.8,204.6 1276.3,204.7 C1282.8,204.8 1287.0,203.5 1295.8,201.5 C1304.6,199.6 1323.7,194.4 1329.3,192.9 M1498.0,1186.9 C1498.5,1184.3 1498.8,1177.3 1500.5,1171.7 C1502.3,1166.1 1503.7,1159.1 1508.7,1153.3 C1513.7,1147.5 1526.9,1139.8 1530.6,1137.1 M549.8,282.7 C551.7,286.1 556.7,299.0 560.9,303.5 C565.0,308.0 570.1,304.2 574.8,309.6 C579.5,315.0 587.2,327.1 589.1,335.8 C591.0,344.6 589.4,353.2 586.1,362.2 C582.8,371.2 572.2,385.3 569.4,389.9 M1594.0,198.7 C1593.6,194.3 1591.5,181.9 1591.5,172.5 C1591.5,163.0 1594.9,149.1 1594.0,142.0 C1593.2,134.9 1589.5,132.9 1586.4,129.9 C1583.3,127.0 1579.4,125.5 1575.4,124.3 C1571.4,123.1 1564.7,123.2 1562.6,122.9 M671.2,551.0 C673.4,556.2 680.9,574.4 684.1,582.4 C687.4,590.5 688.0,592.9 690.7,599.4 C693.4,605.9 698.9,617.9 700.5,621.6 M713.5,299.4 C714.2,303.6 714.7,315.9 717.6,324.4 C720.5,332.8 728.3,342.7 731.0,350.0 C733.6,357.4 732.2,360.8 733.6,368.4 C735.0,376.1 736.5,388.4 739.4,395.8 C742.3,403.2 749.2,410.2 751.1,413.1 M1192.1,572.7 C1195.4,570.8 1206.5,565.3 1211.8,561.3 C1217.2,557.3 1220.7,554.6 1224.2,548.9 C1227.8,543.1 1230.9,534.7 1233.4,526.9 C1235.9,519.1 1239.7,509.2 1239.2,502.1 C1238.7,494.9 1231.8,487.0 1230.4,484.0 M1566.8,428.4 C1561.4,428.2 1542.0,426.7 1534.6,427.3 C1527.2,427.9 1526.3,427.7 1522.2,432.0 C1518.0,436.3 1513.7,447.1 1509.5,453.2 C1505.3,459.3 1502.1,463.6 1496.9,468.7 C1491.6,473.7 1484.5,480.3 1478.0,483.4 C1471.6,486.5 1461.6,486.7 1458.3,487.3 M1448.4,746.0 C1452.8,745.2 1468.6,743.6 1475.3,741.0 C1481.9,738.4 1483.4,733.8 1488.1,730.5 C1492.9,727.2 1499.0,722.8 1504.0,721.1 C1509.0,719.5 1515.8,720.5 1518.1,720.3 M1560.1,1197.3 C1564.5,1199.0 1580.6,1203.8 1586.5,1207.6 C1592.3,1211.3 1593.5,1215.7 1595.1,1219.7 C1596.8,1223.7 1597.3,1225.7 1596.3,1231.7 C1595.4,1237.8 1592.1,1246.7 1589.5,1256.3 C1586.8,1265.9 1581.9,1283.7 1580.4,1289.2 M1220.1,630.1 C1220.2,626.4 1220.9,616.3 1221.0,607.8 C1221.1,599.3 1221.7,587.2 1220.6,579.1 C1219.4,571.0 1215.3,562.5 1214.2,559.1 M1200.2,592.6 C1199.3,595.6 1197.4,602.9 1194.9,610.7 C1192.3,618.5 1187.3,631.3 1184.8,639.5 C1182.3,647.6 1179.9,651.1 1179.8,659.5 C1179.6,667.9 1181.0,679.7 1183.7,690.1 C1186.4,700.6 1193.3,714.0 1196.0,722.2 C1198.7,730.4 1199.1,736.5 1199.8,739.3 M925.7,1253.6 C926.3,1250.7 926.8,1241.3 929.6,1236.2 C932.5,1231.0 938.3,1227.1 942.9,1222.7 C947.5,1218.3 954.7,1211.9 957.0,1209.7" stroke="#f7f7f4" stroke-width="1.5" opacity="0.8" fill="none"/><path d="M836.0,710.0 C855.5,710.7 914.1,710.0 953.2,713.9 C992.2,717.8 1050.8,730.2 1070.4,733.4" fill="none" stroke="#f6f6f4" stroke-width="2" opacity="0.9"/><path d="M1089.9,460.0 L1091.9,694.4" fill="none" stroke="#f6f6f4" stroke-width="2" opacity="0.9"/><path d="M1156.3,460.0 C1157.0,479.5 1162.2,538.1 1160.2,577.2 C1158.3,616.2 1147.2,674.8 1144.6,694.4" fill="none" stroke="#f6f6f4" stroke-width="2" opacity="0.9"/><path d="M914.1,616.2 C927.1,626.7 966.2,663.1 992.2,678.8 C1018.3,694.4 1057.4,704.8 1070.4,710.0" fill="none" stroke="#f6f6f4" stroke-width="2" opacity="0.9"/><path d="M836.0,874.1 C862.0,874.1 940.2,873.4 992.2,874.1 C1044.3,874.7 1096.4,876.7 1148.5,878.0 C1200.6,879.3 1278.7,881.2 1304.8,881.9" fill="none" stroke="#f6f6f4" stroke-width="2" opacity="0.9"/><path d="M992.2,678.8 C990.9,700.9 984.4,766.6 984.4,811.6 C984.4,856.5 990.9,925.5 992.2,948.3" fill="none" stroke="#f6f6f4" stroke-width="2" opacity="0.9"/><path d="M1187.6,499.1 L1187.6,694.4" fill="none" stroke="#f6f6f4" stroke-width="2" opacity="0.9"/><path d="M1226.6,733.4 L1421.9,733.4" fill="none" stroke="#f6f6f4" stroke-width="2" opacity="0.9"/><path d="M953.2,811.6 C972.7,818.1 1031.3,844.1 1070.4,850.6 C1109.4,857.1 1168.0,850.6 1187.6,850.6" fill="none" stroke="#f6f6f4" stroke-width="2" opacity="0.9"/><path d="M985.2,394.4 C995.0,404.1 1027.5,433.4 1043.8,453.0 C1060.1,472.5 1076.4,501.8 1082.9,511.6" fill="none" stroke="#f6f6f4" stroke-width="2" opacity="0.9"/><path d="M926.6,511.6 C946.2,508.3 1008.9,498.5 1043.8,492.0 C1078.7,485.5 1120.6,475.8 1136.0,472.5" fill="none" stroke="#f6f6f4" stroke-width="2" opacity="0.9"/><path d="M1136.0,472.5 C1162.0,471.2 1240.2,467.3 1292.2,464.7 C1344.3,462.1 1422.5,458.2 1448.5,456.9" fill="none" stroke="#f6f6f4" stroke-width="2" opacity="0.9"/><path d="M1253.2,160.0 C1251.9,186.0 1245.4,257.7 1245.4,316.2 C1245.4,374.8 1251.9,479.0 1253.2,511.6" fill="none" stroke="#f6f6f4" stroke-width="2" opacity="0.9"/><path d="M1292.2,589.7 C1311.8,586.4 1376.9,579.9 1409.4,570.2 C1442.0,560.4 1474.5,537.6 1487.6,531.1" fill="none" stroke="#f6f6f4" stroke-width="2" opacity="0.9"/><path d="M1487.6,160.0 L1507.1,316.2" fill="none" stroke="#f6f6f4" stroke-width="2" opacity="0.9"/><path d="M1565.7,723.0 C1570.2,736.0 1591.7,775.1 1593.0,801.1 C1594.3,827.2 1580.7,853.2 1573.5,879.2 C1566.3,905.3 1567.0,926.1 1550.1,957.4 C1533.1,988.6 1500.6,1040.7 1471.9,1066.8 C1443.3,1092.8 1395.1,1092.8 1378.2,1113.6 C1361.3,1134.5 1371.7,1178.7 1370.4,1191.8" fill="none" stroke="#f6f6f4" stroke-width="2" opacity="0.9"/><path d="M1354.8,793.3 C1356.1,840.2 1362.6,992.5 1362.6,1074.6 C1362.6,1156.7 1356.1,1250.7 1354.8,1285.9" fill="none" stroke="#f6f6f4" stroke-width="2" opacity="0.9"/><path d="M1136.0,1168.3 C1175.1,1169.0 1305.3,1174.8 1370.4,1172.2 C1435.5,1169.6 1465.7,1154.0 1526.6,1152.7 C1587.6,1151.4 1701.1,1162.5 1736.0,1164.4" fill="none" stroke="#f6f6f4" stroke-width="2" opacity="0.9"/><path d="M536.0,1098.0 C568.6,1096.7 666.2,1092.8 731.3,1090.2 C796.4,1087.6 894.1,1083.7 926.6,1082.4" fill="none" stroke="#f6f6f4" stroke-width="2" opacity="0.9"/><path d="M661.0,957.4 L664.9,1285.9" fill="none" stroke="#f6f6f4" stroke-width="2" opacity="0.9"/><path d="M926.6,1074.6 L926.6,1285.9" fill="none" stroke="#f6f6f4" stroke-width="2" opacity="0.9"/><path d="M985.2,957.4 L985.2,1285.9" fill="none" stroke="#f6f6f4" stroke-width="2" opacity="0.9"/><path d="M536.0,949.6 C562.0,948.9 633.7,947.0 692.2,945.7 C750.8,944.4 855.0,942.4 887.6,941.8" fill="none" stroke="#f6f6f4" stroke-width="2" opacity="0.9"/><path d="M536.0,1035.5 C555.5,1032.9 607.6,1026.4 653.2,1019.9 C698.8,1013.4 783.4,1000.3 809.4,996.4" fill="none" stroke="#f6f6f4" stroke-width="2" opacity="0.9"/><path d="M536.0,550.6 C562.0,553.9 633.7,563.6 692.2,570.2 C750.8,576.7 855.0,586.4 887.6,589.7" fill="none" stroke="#f6f6f4" stroke-width="2" opacity="0.9"/><path d="M770.4,628.8 L789.9,722.9" fill="none" stroke="#f6f6f4" stroke-width="2" opacity="0.9"/><path d="M903.2,372.9 C890.8,374.8 851.1,371.9 829.0,384.6 C806.8,397.3 784.0,431.2 770.4,449.1 C756.7,467.0 758.0,475.1 746.9,492.0 C735.9,509.0 713.7,532.4 704.0,550.6 C694.2,568.9 691.6,572.7 688.3,601.4 C685.1,630.1 681.2,689.6 684.4,722.9 C687.7,756.2 702.0,775.1 707.9,801.1 C713.7,827.2 711.8,851.9 719.6,879.2 C727.4,906.6 746.3,939.1 754.8,965.2 C763.2,991.2 765.8,1004.2 770.4,1035.5 C774.9,1066.8 780.1,1133.2 782.1,1152.7" fill="none" stroke="#f8f8f6" stroke-width="4.5"/><path d="M782.1,1152.7 C789.9,1152.7 804.9,1155.9 829.0,1152.7 C853.1,1149.4 903.8,1134.5 926.6,1133.2 C949.4,1131.9 946.2,1138.4 965.7,1144.9 C985.2,1151.4 1015.4,1166.4 1043.8,1172.2 C1072.2,1178.1 1120.6,1178.7 1136.0,1180.0" fill="none" stroke="#f8f8f6" stroke-width="4.5"/><path d="M536.0,312.3 C549.0,313.0 594.6,316.2 614.1,316.2 C633.7,316.2 640.2,305.8 653.2,312.3 C666.2,318.9 680.5,340.3 692.2,355.3 C704.0,370.3 717.0,389.2 723.5,402.2 C730.0,415.2 723.5,424.3 731.3,433.4 C739.1,442.6 757.4,446.5 770.4,456.9 C783.4,467.3 797.7,482.9 809.4,495.9 C821.2,509.0 830.9,522.0 840.7,535.0 C850.5,548.0 858.9,561.7 868.0,574.1 C877.1,586.4 890.8,603.4 895.4,609.2" fill="none" stroke="#f8f8f6" stroke-width="4.5"/><path d="M684.4,597.5 C692.2,602.7 717.0,618.3 731.3,628.8 C745.6,639.2 757.4,651.5 770.4,660.0 C783.4,668.5 796.4,669.0 809.4,679.5 C822.5,690.0 842.0,715.7 848.5,722.9" fill="none" stroke="#f8f8f6" stroke-width="4.5"/><path d="M907.1,620.9 L977.4,562.3" fill="none" stroke="#f8f8f6" stroke-width="4.5"/><path d="M1253.2,933.9 C1272.7,944.4 1324.8,969.7 1370.4,996.4 C1415.9,1023.1 1476.5,1055.0 1526.6,1094.1 C1576.8,1133.2 1641.9,1198.8 1671.2,1230.8 C1700.5,1262.8 1697.2,1276.7 1702.4,1285.9" fill="none" stroke="#f8f8f6" stroke-width="4.5"/><path d="M1417.2,433.4 C1422.5,439.9 1438.7,461.4 1448.5,472.5 C1458.3,483.6 1468.0,489.4 1475.8,499.8 C1483.7,510.3 1491.5,520.0 1495.4,535.0 C1499.3,550.0 1500.6,574.1 1499.3,589.7 C1498.0,605.3 1488.2,606.5 1487.6,628.8 C1486.9,651.0 1495.4,707.2 1495.4,722.9 C1495.4,738.6 1488.9,723.0 1487.6,723.0" fill="none" stroke="#f8f8f6" stroke-width="4.5"/><path d="M926.6,1074.6 C933.1,1066.8 952.7,1044.6 965.7,1027.7 C978.7,1010.8 998.2,982.1 1004.8,973.0" fill="none" stroke="#f8f8f6" stroke-width="4.5"/><path d="M1054.8,460.0 L1062.6,526.4" fill="none" stroke="#f8f8f6" stroke-width="4.5"/><path d="M809.4,160.0 C817.2,173.0 844.6,216.0 856.3,238.1 C868.0,260.3 872.6,272.0 879.8,292.8 C886.9,313.6 895.0,344.9 899.3,363.1 C903.5,381.4 902.2,387.9 905.1,402.2 C908.1,416.5 906.9,434.2 916.9,449.1 C926.8,463.9 952.3,476.4 964.9,491.2 C977.5,506.1 987.0,525.8 992.2,538.1 C997.5,550.5 993.6,556.4 996.2,565.5 C998.8,574.6 999.4,585.0 1007.9,592.8 C1016.3,600.6 1037.8,605.2 1046.9,612.3 C1056.1,619.5 1059.3,624.7 1062.6,635.8 C1065.8,646.8 1062.6,666.4 1066.5,678.8 C1070.4,691.1 1079.5,701.5 1086.0,710.0 C1092.5,718.5 1102.3,726.3 1105.5,729.5" fill="none" stroke="#cfd0cd" stroke-width="4.2" stroke-linejoin="round" stroke-linecap="round"/><path d="M1180.4,160.0 C1181.3,166.9 1184.8,187.9 1186.0,201.7 C1187.2,215.5 1189.2,230.1 1187.4,243.0 C1185.6,255.9 1180.8,264.6 1175.0,279.4 C1169.2,294.2 1158.7,314.9 1152.7,332.0 C1146.7,349.1 1143.4,366.7 1138.8,382.0 C1134.2,397.3 1130.0,407.8 1124.9,424.0 C1119.8,440.2 1111.7,467.9 1108.0,479.4 C1104.3,490.9 1101.2,488.4 1103.0,493.0 C1104.8,497.6 1114.0,500.9 1119.0,507.0 C1124.0,513.1 1130.0,522.9 1133.0,529.4 C1136.0,535.9 1138.1,538.0 1136.8,545.9 C1135.5,553.9 1126.4,563.5 1125.1,577.2 C1123.8,590.9 1127.0,614.9 1129.0,628.0 C1130.9,641.0 1136.1,645.5 1136.8,655.3 C1137.4,665.1 1134.2,678.8 1132.9,686.6 C1131.6,694.4 1131.9,695.8 1129.0,702.2 C1126.0,708.6 1117.3,721.2 1115.0,725.0" fill="none" stroke="#cfd0cd" stroke-width="4.2" stroke-linejoin="round" stroke-linecap="round"/><path d="M903.2,372.9 C913.6,370.0 948.8,360.2 965.7,355.3 C982.6,350.4 993.0,346.1 1004.8,343.6 C1016.5,341.1 1021.5,341.7 1036.0,340.5 C1050.5,339.3 1072.1,337.4 1091.6,336.4 C1111.0,335.4 1136.0,332.8 1152.7,334.4 C1169.4,336.0 1177.7,342.7 1191.6,346.0 C1205.5,349.3 1208.8,353.8 1236.0,354.4 C1263.2,355.0 1332.4,348.6 1354.8,349.5 C1377.1,350.3 1361.3,347.5 1370.4,359.2 C1379.5,370.9 1402.9,409.7 1409.4,419.8" fill="none" stroke="#cfd0cd" stroke-width="4.2" stroke-linejoin="round" stroke-linecap="round"/><path d="M1736.0,218.6 C1720.6,227.7 1675.5,255.1 1643.8,273.3 C1612.2,291.5 1578.7,307.8 1546.2,328.0 C1513.6,348.2 1471.3,378.8 1448.5,394.4 C1425.7,410.0 1425.7,410.7 1409.4,421.7 C1393.2,432.8 1369.1,447.8 1350.8,460.8 C1332.6,473.8 1311.0,487.6 1300.1,499.8 C1289.1,512.1 1287.7,528.5 1285.2,534.2" fill="none" stroke="#cfd0cd" stroke-width="4.2" stroke-linejoin="round" stroke-linecap="round"/><path d="M1736.0,550.6 C1701.1,563.6 1587.6,606.6 1526.6,628.8 C1465.7,650.9 1408.0,670.5 1370.4,683.4 C1332.7,696.3 1321.5,699.1 1300.8,706.1 C1280.1,713.1 1263.1,713.9 1246.2,725.6 C1229.2,737.3 1216.2,766.6 1199.3,776.4 C1182.4,786.2 1158.3,785.5 1144.6,784.2 C1130.9,782.9 1123.1,775.8 1117.2,768.6 C1111.4,761.4 1110.7,745.8 1109.4,741.2" fill="none" stroke="#cfd0cd" stroke-width="4.2" stroke-linejoin="round" stroke-linecap="round"/><path d="M536.0,848.0 C555.5,844.7 610.9,836.9 653.2,828.5 C695.5,820.0 747.6,807.0 789.9,797.2 C832.2,787.5 873.4,773.3 907.1,769.9 C940.8,766.4 965.0,773.0 992.2,776.4 C1019.5,779.8 1046.3,787.5 1070.4,790.1 C1094.5,792.7 1125.7,791.7 1136.8,792.0" fill="none" stroke="#cfd0cd" stroke-width="4.2" stroke-linejoin="round" stroke-linecap="round"/><path d="M1144.6,784.2 C1153.7,783.6 1168.2,780.1 1199.3,780.3 C1230.4,780.5 1299.5,780.7 1331.3,785.5 C1363.1,790.3 1362.6,799.8 1389.9,808.9 C1417.2,818.1 1462.8,833.0 1495.4,840.2 C1527.9,847.3 1545.1,846.4 1585.2,851.9 C1625.3,857.4 1710.9,869.8 1736.0,873.4" fill="none" stroke="#cfd0cd" stroke-width="4.2" stroke-linejoin="round" stroke-linecap="round"/><path d="M1136.8,803.8 C1142.0,809.0 1154.4,823.3 1168.0,835.0 C1181.7,846.7 1204.5,857.1 1218.8,874.1 C1233.1,891.0 1241.7,917.5 1254.0,936.6 C1266.2,955.7 1285.9,959.1 1292.2,988.6 C1298.6,1018.1 1302.0,1064.1 1292.2,1113.6 C1282.5,1163.2 1243.4,1257.2 1233.7,1285.9" fill="none" stroke="#cfd0cd" stroke-width="4.2" stroke-linejoin="round" stroke-linecap="round"/><path d="M1074.3,749.1 C1073.0,756.2 1069.1,775.1 1066.5,792.0 C1063.9,809.0 1064.5,834.3 1058.7,850.6 C1052.8,866.9 1048.9,876.7 1031.3,889.7 C1013.7,902.7 978.4,916.8 953.2,928.8 C927.9,940.7 902.4,946.1 879.8,961.3 C857.1,976.5 838.1,1005.6 817.2,1019.9 C796.4,1034.2 782.1,1035.5 754.8,1047.2 C727.4,1058.9 685.7,1077.2 653.2,1090.2 C620.6,1103.2 579.0,1115.6 559.4,1125.3 C539.9,1135.1 539.9,1144.9 536.0,1148.8" fill="none" stroke="#cfd0cd" stroke-width="4.2" stroke-linejoin="round" stroke-linecap="round"/><path d="M996.2,565.5 C1003.8,559.5 1002.0,552.4 1011.8,545.9 C1021.5,539.4 1035.2,530.0 1054.8,526.4 C1074.3,522.8 1110.1,523.5 1129.0,524.5 C1147.8,525.4 1142.6,530.6 1168.0,532.3 C1193.4,533.9 1263.1,526.7 1281.3,534.2 C1299.5,541.7 1278.7,560.3 1277.4,577.2 C1276.1,594.1 1273.8,619.5 1273.5,635.8 C1273.2,652.1 1270.9,663.8 1275.5,674.8 C1280.0,685.9 1296.0,692.4 1300.8,702.2 C1305.7,712.0 1304.4,708.7 1304.8,733.4 C1305.1,758.2 1306.1,821.3 1302.8,850.6 C1299.5,879.9 1293.4,894.9 1285.2,909.2 C1277.1,923.5 1263.7,929.3 1254.0,936.6 C1244.2,943.9 1250.7,949.4 1226.6,953.0 C1202.5,956.5 1155.0,957.5 1109.4,958.0 C1063.9,958.6 991.6,955.8 953.2,956.1 C914.8,956.4 895.1,966.3 879.0,960.0 C862.8,953.7 864.0,935.0 856.3,918.3 C848.6,901.6 841.3,881.2 832.9,859.7 C824.4,838.2 810.1,812.2 805.5,789.4 C801.0,766.6 799.7,743.8 805.5,722.9 C811.4,702.0 827.0,682.9 840.7,663.9 C854.4,645.0 873.2,620.9 887.6,609.2 C901.9,597.5 913.6,598.2 926.6,593.6 C939.6,589.0 954.1,586.6 965.7,581.9 C977.3,577.2 988.5,571.5 996.2,565.5Z" fill="none" stroke="#cfd0cd" stroke-width="4.2"/><text text-anchor="middle" fill="#5e5e5e" font-size="14" font-weight="bold" letter-spacing="2.2" style="" stroke="#f4f4f2" stroke-width="2.5" paint-order="stroke" transform="rotate(-15 875.6 228.3)"><tspan x="875.6" y="233.4">Balcones Escarpment</tspan></text><text text-anchor="middle" fill="#727270" font-size="11.5" font-weight="normal" letter-spacing="0.6" style="" stroke="#f4f4f2" stroke-width="2.5" paint-order="stroke" transform="rotate(-80 737.4 288.8)"><tspan x="737.4" y="293.0">Scenic Loop Rd</tspan></text><text text-anchor="middle" fill="#727270" font-size="11.5" font-weight="normal" letter-spacing="0.6" style="" stroke="#f4f4f2" stroke-width="2.5" paint-order="stroke" transform="rotate(55 694.1 357.1)"><tspan x="694.1" y="361.3">Bandera Rd</tspan></text><text text-anchor="middle" fill="#727270" font-size="11.5" font-weight="normal" letter-spacing="0.6" style="" stroke="#f4f4f2" stroke-width="2.5" paint-order="stroke" transform="rotate(70 887.3 327.9)"><tspan x="887.3" y="332.0">W I-10</tspan></text><text text-anchor="middle" fill="#727270" font-size="11.5" font-weight="normal" letter-spacing="0.6" style="" stroke="#f4f4f2" stroke-width="2.5" paint-order="stroke" transform="rotate(65 1064.6 315.4)"><tspan x="1064.6" y="319.5">Blanco Rd</tspan></text><text text-anchor="middle" fill="#727270" font-size="11.5" font-weight="normal" letter-spacing="0.6" style="" stroke="#f4f4f2" stroke-width="2.5" paint-order="stroke" transform="rotate(80 1241.0 306.8)"><tspan x="1241.0" y="310.9">Bulverde Rd</tspan></text><text text-anchor="middle" fill="#474747" font-size="13" font-weight="bold" letter-spacing="0.9" style="" stroke="#f4f4f2" stroke-width="2.5" paint-order="stroke"><tspan x="1620.9" y="312.2">Northcliff</tspan></text><text text-anchor="middle" fill="#727270" font-size="12" font-weight="normal" letter-spacing="0.6" style="font-weight:bold;fill:#555;" stroke="#f4f4f2" stroke-width="2.5" paint-order="stroke" transform="rotate(-35 1490.9 369.6)"><tspan x="1490.9" y="374.0">Purple Heart Trl</tspan></text><text text-anchor="middle" fill="#474747" font-size="13" font-weight="bold" letter-spacing="0.9" style="" stroke="#f4f4f2" stroke-width="2.5" paint-order="stroke"><tspan x="1141.1" y="366.8">Hollywood</tspan><tspan x="1141.1" y="381.8">Park</tspan></text><text text-anchor="middle" fill="#474747" font-size="13" font-weight="bold" letter-spacing="0.9" style="" stroke="#f4f4f2" stroke-width="2.5" paint-order="stroke"><tspan x="990.8" y="382.5">Shavano Park</tspan></text><text text-anchor="middle" fill="#6d7d5f" font-size="12" font-weight="normal" letter-spacing="0" style="" stroke="#f4f4f2" stroke-width="2.5" paint-order="stroke"><tspan x="599.6" y="415.5">Government</tspan><tspan x="599.6" y="429.3">Canyon</tspan></text><text text-anchor="middle" fill="#474747" font-size="13" font-weight="bold" letter-spacing="0.9" style="" stroke="#f4f4f2" stroke-width="2.5" paint-order="stroke"><tspan x="730.8" y="437.2">Helotes</tspan></text><text text-anchor="middle" fill="#727270" font-size="11.5" font-weight="normal" letter-spacing="0.6" style="" stroke="#f4f4f2" stroke-width="2.5" paint-order="stroke" transform="rotate(62 1340.2 409.8)"><tspan x="1340.2" y="414.0">Judson Rd</tspan></text><text text-anchor="middle" fill="#474747" font-size="13" font-weight="bold" letter-spacing="0.9" style="" stroke="#f4f4f2" stroke-width="2.5" paint-order="stroke"><tspan x="1246.5" y="436.0">Wetmore</tspan></text><text text-anchor="middle" fill="#474747" font-size="13" font-weight="bold" letter-spacing="0.9" style="" stroke="#f4f4f2" stroke-width="2.5" paint-order="stroke"><tspan x="1529.5" y="429.0">Schertz</tspan></text><text text-anchor="middle" fill="#474747" font-size="13" font-weight="bold" letter-spacing="0.9" style="" stroke="#f4f4f2" stroke-width="2.5" paint-order="stroke"><tspan x="1620.5" y="448.5">Cibolo</tspan></text><text text-anchor="middle" fill="#474747" font-size="13" font-weight="bold" letter-spacing="0.9" style="" stroke="#f4f4f2" stroke-width="2.5" paint-order="stroke"><tspan x="1425.3" y="456.7">Live Oak</tspan></text><text text-anchor="middle" fill="#474747" font-size="13" font-weight="bold" letter-spacing="0.9" style="" stroke="#f4f4f2" stroke-width="2.5" paint-order="stroke"><tspan x="1047.0" y="505.5">Castle Hills</tspan></text><text text-anchor="middle" fill="#474747" font-size="13" font-weight="bold" letter-spacing="0.9" style="" stroke="#f4f4f2" stroke-width="2.5" paint-order="stroke"><tspan x="1474.1" y="505.5">Airport City</tspan></text><text text-anchor="middle" fill="#474747" font-size="13" font-weight="bold" letter-spacing="0.9" style="" stroke="#f4f4f2" stroke-width="2.5" paint-order="stroke"><tspan x="1319.9" y="538.3">Windcrest</tspan></text><text text-anchor="middle" fill="#474747" font-size="13" font-weight="bold" letter-spacing="0.9" style="" stroke="#f4f4f2" stroke-width="2.5" paint-order="stroke"><tspan x="1453.4" y="542.2">Converse</tspan></text><text text-anchor="middle" fill="#727270" font-size="11.5" font-weight="normal" letter-spacing="0.6" style="" stroke="#f4f4f2" stroke-width="2.5" paint-order="stroke" transform="rotate(-88 1043.5 566.0)"><tspan x="1043.5" y="570.1">West Ave</tspan></text><text text-anchor="middle" fill="#727270" font-size="11.5" font-weight="normal" letter-spacing="0.6" style="" stroke="#f4f4f2" stroke-width="2.5" paint-order="stroke" transform="rotate(-2 1279.7 576.9)"><tspan x="1279.7" y="581.1">Eisenhauer Rd</tspan></text><text text-anchor="middle" fill="#727270" font-size="11.5" font-weight="normal" letter-spacing="0.6" style="" stroke="#f4f4f2" stroke-width="2.5" paint-order="stroke" transform="rotate(-28 1401.1 591.4)"><tspan x="1401.1" y="595.5">Seguin Rd</tspan></text><text text-anchor="middle" fill="#606060" font-size="10" font-weight="normal" letter-spacing="0" style="font-style:italic;" stroke="#f4f4f2" stroke-width="2.5" paint-order="stroke"><tspan x="648.4" y="582.5">1138 ft</tspan></text><text text-anchor="middle" fill="#474747" font-size="13" font-weight="bold" letter-spacing="0.9" style="" stroke="#f4f4f2" stroke-width="2.5" paint-order="stroke"><tspan x="867.8" y="589.8">Leon Valley</tspan></text><text text-anchor="middle" fill="#727270" font-size="11.5" font-weight="normal" letter-spacing="0.6" style="" stroke="#f4f4f2" stroke-width="2.5" paint-order="stroke" transform="rotate(-42 942.4 594.5)"><tspan x="942.4" y="598.6">Callaghan Rd</tspan></text><text text-anchor="middle" fill="#727270" font-size="11.5" font-weight="normal" letter-spacing="0.6" style="" stroke="#f4f4f2" stroke-width="2.5" paint-order="stroke" transform="rotate(-88 778.0 546.5)"><tspan x="778.0" y="550.6">Tezel Rd</tspan></text><text text-anchor="middle" fill="#474747" font-size="13" font-weight="bold" letter-spacing="0.9" style="" stroke="#f4f4f2" stroke-width="2.5" paint-order="stroke"><tspan x="1155.5" y="608.5">Alamo Heights</tspan></text><text text-anchor="middle" fill="#727270" font-size="11.5" font-weight="normal" letter-spacing="0.6" style="" stroke="#f4f4f2" stroke-width="2.5" paint-order="stroke" transform="rotate(-22 1599.8 605.8)"><tspan x="1599.8" y="610.0">I-10-E</tspan></text><text text-anchor="middle" fill="#727270" font-size="11.5" font-weight="normal" letter-spacing="0.6" style="" stroke="#f4f4f2" stroke-width="2.5" paint-order="stroke" transform="rotate(42 799.5 634.3)"><tspan x="799.5" y="638.5">Culebra Rd</tspan></text><text text-anchor="middle" fill="#727270" font-size="11.5" font-weight="normal" letter-spacing="0.6" style="" stroke="#f4f4f2" stroke-width="2.5" paint-order="stroke" transform="rotate(60 727.3 658.5)"><tspan x="727.3" y="662.7">TX-151</tspan></text><text text-anchor="middle" fill="#474747" font-size="13" font-weight="bold" letter-spacing="0.9" style="" stroke="#f4f4f2" stroke-width="2.5" paint-order="stroke"><tspan x="1317.9" y="635.1">Kirby</tspan></text><text text-anchor="middle" fill="#727270" font-size="11.5" font-weight="normal" letter-spacing="0.6" style="" stroke="#f4f4f2" stroke-width="2.5" paint-order="stroke" transform="rotate(80 1638.8 665.5)"><tspan x="1638.8" y="669.7">FM-1518 N</tspan></text><text text-anchor="middle" fill="#8f8f8d" font-size="15" font-weight="normal" letter-spacing="3.5" style="" stroke="#f4f4f2" stroke-width="2.5" paint-order="stroke"><tspan x="1053.3" y="683.8">Bexar</tspan></text><text text-anchor="middle" fill="#727270" font-size="11.5" font-weight="normal" letter-spacing="0.6" style="" stroke="#f4f4f2" stroke-width="2.5" paint-order="stroke" transform="rotate(-22 1428.0 667.5)"><tspan x="1428.0" y="671.6">I-10-E</tspan></text><text text-anchor="middle" fill="#727270" font-size="11.5" font-weight="normal" letter-spacing="0.6" style="" stroke="#f4f4f2" stroke-width="2.5" paint-order="stroke" transform="rotate(-5 686.3 710.0)"><tspan x="686.3" y="714.2">Potranco Rd</tspan></text><text text-anchor="middle" fill="#727270" font-size="11.5" font-weight="normal" letter-spacing="0.6" style="" stroke="#f4f4f2" stroke-width="2.5" paint-order="stroke" transform="rotate(6 903.7 710.4)"><tspan x="903.7" y="714.6">W Commerce St</tspan></text><text text-anchor="middle" fill="#3a3a3a" font-size="19" font-weight="bold" letter-spacing="1.2" style="" stroke="#f4f4f2" stroke-width="2.5" paint-order="stroke"><tspan x="1102.1" y="738.7">San Antonio</tspan></text><text text-anchor="middle" fill="#727270" font-size="11.5" font-weight="normal" letter-spacing="0.6" style="" stroke="#f4f4f2" stroke-width="2.5" paint-order="stroke"><tspan x="1524.8" y="742.7">St Hedwig Rd</tspan></text><text text-anchor="middle" fill="#474747" font-size="13" font-weight="bold" letter-spacing="0.9" style="" stroke="#f4f4f2" stroke-width="2.5" paint-order="stroke"><tspan x="1664.2" y="758.1">St Hedwig</tspan></text><text text-anchor="middle" fill="#727270" font-size="11.5" font-weight="normal" letter-spacing="0.6" style="" stroke="#f4f4f2" stroke-width="2.5" paint-order="stroke" transform="rotate(68 558.3 761.2)"><tspan x="558.3" y="765.3">Texas Research Pkwy</tspan></text><text text-anchor="middle" fill="#727270" font-size="11.5" font-weight="normal" letter-spacing="0.6" style="" stroke="#f4f4f2" stroke-width="2.5" paint-order="stroke" transform="rotate(-18 958.4 753.4)"><tspan x="958.4" y="757.5">Castroville Rd</tspan></text><text text-anchor="middle" fill="#474747" font-size="13" font-weight="bold" letter-spacing="0.9" style="" stroke="#f4f4f2" stroke-width="2.5" paint-order="stroke"><tspan x="808.9" y="774.8">Kelland</tspan><tspan x="808.9" y="789.7">Heights</tspan></text><text text-anchor="middle" fill="#6aa6c8" font-size="9" font-weight="normal" letter-spacing="0" style="font-style:italic;" stroke="#f4f4f2" stroke-width="2.5" paint-order="stroke" transform="rotate(35 733.1 761.2)"><tspan x="733.1" y="764.4">Medio Creek</tspan></text><text text-anchor="middle" fill="#727270" font-size="11.5" font-weight="normal" letter-spacing="0.6" style="" stroke="#f4f4f2" stroke-width="2.5" paint-order="stroke" transform="rotate(-88 1357.8 833.4)"><tspan x="1357.8" y="837.5">S Foster Rd</tspan></text><text text-anchor="middle" fill="#474747" font-size="13" font-weight="bold" letter-spacing="0.9" style="" stroke="#f4f4f2" stroke-width="2.5" paint-order="stroke"><tspan x="1039.6" y="845.8">Columbia</tspan><tspan x="1039.6" y="860.8">Heights</tspan></text><text text-anchor="middle" fill="#474747" font-size="13" font-weight="bold" letter-spacing="0.9" style="" stroke="#f4f4f2" stroke-width="2.5" paint-order="stroke"><tspan x="1569.3" y="856.4">Lone Oak</tspan></text><text text-anchor="middle" fill="#727270" font-size="11.5" font-weight="normal" letter-spacing="0.6" style="" stroke="#f4f4f2" stroke-width="2.5" paint-order="stroke" transform="rotate(22 1458.5 893.1)"><tspan x="1458.5" y="897.3">New Sulphur Springs Rd</tspan></text><text text-anchor="middle" fill="#727270" font-size="11.5" font-weight="normal" letter-spacing="0.6" style="" stroke="#f4f4f2" stroke-width="2.5" paint-order="stroke" transform="rotate(65 834.6 872.4)"><tspan x="834.6" y="876.6">SW 410 LOOP</tspan></text><text text-anchor="middle" fill="#6d7d5f" font-size="12" font-weight="normal" letter-spacing="0" style="" stroke="#f4f4f2" stroke-width="2.5" paint-order="stroke"><tspan x="1179.0" y="918.4">San Antonio</tspan><tspan x="1179.0" y="932.2">Missions National</tspan><tspan x="1179.0" y="946.0">Historical Park</tspan></text><text text-anchor="middle" fill="#474747" font-size="13" font-weight="bold" letter-spacing="0.9" style="" stroke="#f4f4f2" stroke-width="2.5" paint-order="stroke"><tspan x="983.4" y="930.9">Palo Alto</tspan><tspan x="983.4" y="945.9">Heights</tspan></text><text text-anchor="middle" fill="#727270" font-size="11.5" font-weight="normal" letter-spacing="0.6" style="" stroke="#f4f4f2" stroke-width="2.5" paint-order="stroke" transform="rotate(-6 628.5 944.7)"><tspan x="628.5" y="948.8">Macdona Lacoste Rd</tspan></text><text text-anchor="middle" fill="#727270" font-size="11.5" font-weight="normal" letter-spacing="0.6" style="" stroke="#f4f4f2" stroke-width="2.5" paint-order="stroke" transform="rotate(62 746.8 964.2)"><tspan x="746.8" y="968.3">W TX-1604-LOOP S</tspan></text><text text-anchor="middle" fill="#5a5a5a" font-size="14.5" font-weight="bold" letter-spacing="1.6" style="font-style:italic;" stroke="#f4f4f2" stroke-width="2.5" paint-order="stroke"><tspan x="811.6" y="974.7">Von Ormy</tspan><tspan x="811.6" y="991.4">Oil Field</tspan></text><text text-anchor="middle" fill="#727270" font-size="11.5" font-weight="normal" letter-spacing="0.6" style="" stroke="#f4f4f2" stroke-width="2.5" paint-order="stroke" transform="rotate(88 668.7 1013.0)"><tspan x="668.7" y="1017.1">Shepherd Rd</tspan></text><text text-anchor="middle" fill="#727270" font-size="11.5" font-weight="normal" letter-spacing="0.6" style="" stroke="#f4f4f2" stroke-width="2.5" paint-order="stroke" transform="rotate(-55 883.4 1014.9)"><tspan x="883.4" y="1019.1">Somerset Rd</tspan></text><text text-anchor="middle" fill="#727270" font-size="11.5" font-weight="normal" letter-spacing="0.6" style="" stroke="#f4f4f2" stroke-width="2.5" paint-order="stroke" transform="rotate(70 1097.0 1036.4)"><tspan x="1097.0" y="1040.5">Pleasanton Rd</tspan></text><text text-anchor="middle" fill="#727270" font-size="11.5" font-weight="normal" letter-spacing="0.6" style="" stroke="#f4f4f2" stroke-width="2.5" paint-order="stroke" transform="rotate(65 1160.6 1046.2)"><tspan x="1160.6" y="1050.3">S Flores St</tspan></text><text text-anchor="middle" fill="#6aa6c8" font-size="9" font-weight="normal" letter-spacing="0" style="font-style:italic;" stroke="#f4f4f2" stroke-width="2.5" paint-order="stroke" transform="rotate(58 1244.2 1077.4)"><tspan x="1244.2" y="1080.6">San Antonio River</tspan></text><text text-anchor="middle" fill="#727270" font-size="11.5" font-weight="normal" letter-spacing="0.6" style="" stroke="#f4f4f2" stroke-width="2.5" paint-order="stroke" transform="rotate(-88 1486.6 991.5)"><tspan x="1486.6" y="995.7">Stuart Rd</tspan></text><text text-anchor="middle" fill="#727270" font-size="11.5" font-weight="normal" letter-spacing="0.6" style="" stroke="#f4f4f2" stroke-width="2.5" paint-order="stroke" transform="rotate(-22 594.6 1028.6)"><tspan x="594.6" y="1032.7">Jarratt Rd</tspan></text><text text-anchor="middle" fill="#727270" font-size="12" font-weight="normal" letter-spacing="0.6" style="font-weight:bold;fill:#555;" stroke="#f4f4f2" stroke-width="2.5" paint-order="stroke" transform="rotate(-25 704.3 1071.5)"><tspan x="704.3" y="1075.9">Purple Heart Trl</tspan></text><text text-anchor="middle" fill="#474747" font-size="13" font-weight="bold" letter-spacing="0.9" style="" stroke="#f4f4f2" stroke-width="2.5" paint-order="stroke"><tspan x="1409.7" y="1094.6">Elmendorf</tspan></text><text text-anchor="middle" fill="#727270" font-size="11.5" font-weight="normal" letter-spacing="0.6" style="" stroke="#f4f4f2" stroke-width="2.5" paint-order="stroke"><tspan x="586.7" y="1155.3">FM 2790</tspan></text><text text-anchor="middle" fill="#727270" font-size="11.5" font-weight="normal" letter-spacing="0.6" style="" stroke="#f4f4f2" stroke-width="2.5" paint-order="stroke" transform="rotate(-10 892.0 1147.7)"><tspan x="892.0" y="1151.8">S TX-1604-LOOP W</tspan></text><text text-anchor="middle" fill="#5a5a5a" font-size="14.5" font-weight="bold" letter-spacing="1.6" style="font-style:italic;" stroke="#f4f4f2" stroke-width="2.5" paint-order="stroke"><tspan x="801.5" y="1178.9">Somerset</tspan><tspan x="801.5" y="1195.6">Oil Field</tspan></text><text text-anchor="middle" fill="#474747" font-size="13" font-weight="bold" letter-spacing="0.9" style="" stroke="#f4f4f2" stroke-width="2.5" paint-order="stroke"><tspan x="1561.5" y="1168.7">Calaveras</tspan></text><text text-anchor="middle" fill="#474747" font-size="13" font-weight="bold" letter-spacing="0.9" style="" stroke="#f4f4f2" stroke-width="2.5" paint-order="stroke"><tspan x="1076.7" y="1186.7">Thelma</tspan></text><text text-anchor="middle" fill="#727270" font-size="11.5" font-weight="normal" letter-spacing="0.6" style="" stroke="#f4f4f2" stroke-width="2.5" paint-order="stroke"><tspan x="635.5" y="1208.4">FM 3175</tspan></text><text text-anchor="middle" fill="#727270" font-size="11.5" font-weight="normal" letter-spacing="0.6" style="" stroke="#f4f4f2" stroke-width="2.5" paint-order="stroke" transform="rotate(-42 1283.6 1216.0)"><tspan x="1283.6" y="1220.1">Priest Rd</tspan></text><text text-anchor="middle" fill="#474747" font-size="13" font-weight="bold" letter-spacing="0.9" style="" stroke="#f4f4f2" stroke-width="2.5" paint-order="stroke"><tspan x="1522.9" y="1233.5">Canada Verde</tspan></text><text text-anchor="middle" fill="#606060" font-size="10" font-weight="normal" letter-spacing="0" style="font-style:italic;" stroke="#f4f4f2" stroke-width="2.5" paint-order="stroke"><tspan x="1006.4" y="1241.8">805 ft</tspan></text><text text-anchor="middle" fill="#727270" font-size="11.5" font-weight="normal" letter-spacing="0.6" style="" stroke="#f4f4f2" stroke-width="2.5" paint-order="stroke" transform="rotate(75 1191.1 1245.6)"><tspan x="1191.1" y="1249.8">Campbellton Rd</tspan></text><text text-anchor="middle" fill="#606060" font-size="10" font-weight="normal" letter-spacing="0" style="font-style:italic;" stroke="#f4f4f2" stroke-width="2.5" paint-order="stroke"><tspan x="639.5" y="164.4">1791 ft</tspan></text><rect x="1432.3" y="205.3" width="31.2" height="15.6" rx="2" fill="#f6f6f4" stroke="#8a8a8a" stroke-width="1"/><text x="1447.9" y="216.6" text-anchor="middle" font-size="10" fill="#555">3009</text><rect x="1262.1" y="784.6" width="23.4" height="17.2" rx="2" fill="#f6f6f4" stroke="#8a8a8a" stroke-width="1"/><text x="1273.8" y="796.7" text-anchor="middle" font-size="10" fill="#555">13</text><rect x="1700.9" y="1011.0" width="25.8" height="15.6" rx="2" fill="#f6f6f4" stroke="#8a8a8a" stroke-width="1"/><text x="1713.8" y="1022.3" text-anchor="middle" font-size="10" fill="#555">775</text><circle cx="984" cy="346" r="6.6" fill="#247d22" stroke="#154d15" stroke-width="1.8"/><circle cx="1092" cy="553" r="6.6" fill="#247d22" stroke="#154d15" stroke-width="1.8"/><circle cx="1181.7" cy="638.3" r="6.6" fill="#247d22" stroke="#154d15" stroke-width="1.8"/><circle cx="1174.4" cy="720.5" r="6.6" fill="#247d22" stroke="#154d15" stroke-width="1.8"/><circle cx="1101.7" cy="728.9" r="6.6" fill="#247d22" stroke="#154d15" stroke-width="1.8"/><circle cx="1129.4" cy="752.8" r="6.6" fill="#247d22" stroke="#154d15" stroke-width="1.8"/><circle cx="1134" cy="802" r="6.6" fill="#247d22" stroke="#154d15" stroke-width="1.8"/><circle cx="743" cy="770" r="6.6" fill="#247d22" stroke="#154d15" stroke-width="1.8"/><circle cx="1372" cy="686" r="6.6" fill="#247d22" stroke="#154d15" stroke-width="1.8"/><circle cx="1437" cy="447" r="6.6" fill="#247d22" stroke="#154d15" stroke-width="1.8"/><circle cx="1019" cy="1017" r="6.6" fill="#247d22" stroke="#154d15" stroke-width="1.8"/><rect x="557.5" y="180" width="84" height="39" rx="4" fill="#272727" stroke="#161616" stroke-width="1.2"/><rect x="599.5" y="181" width="1.5" height="37" fill="#3a3a3a"/><g fill="none" stroke="#9c9c9c" stroke-width="1.5"><rect x="567.5" y="191" width="20" height="19" rx="2.5"/></g><g fill="#9c9c9c"><rect x="569" y="192.5" width="3" height="2.5"/><rect x="573.5" y="192.5" width="3" height="2.5"/><rect x="569" y="197" width="5" height="3"/><rect x="576" y="197" width="3" height="3"/><rect x="581" y="195" width="3" height="3"/><rect x="569" y="202" width="3" height="3"/><rect x="574" y="201" width="4" height="4"/><rect x="569" y="206.5" width="4" height="2.5"/><rect x="575" y="206" width="3" height="3"/><rect x="581" y="204" width="3" height="4"/></g><path d="M616.5 198l4.8 4.8 4.8-4.8" stroke="#9a9a9a" stroke-width="1.8" fill="none"/><rect x="1587" y="180" width="125.5" height="39.5" rx="4" fill="#272727" stroke="#161616" stroke-width="1.2"/><path d="M1599 201l8.5-8 8.5 8M1601.5 199v10h4v-6h4v6h4v-10" stroke="#9a9a9a" stroke-width="1.7" fill="none"/><g fill="#9a9a9a"><rect x="1641" y="192" width="3" height="3"/><rect x="1641" y="197.5" width="3" height="3"/><rect x="1641" y="203" width="3" height="3"/><rect x="1641" y="208" width="3" height="3"/><rect x="1647" y="192.5" width="12" height="2"/><rect x="1647" y="198" width="12" height="2"/><rect x="1647" y="203.5" width="12" height="2"/><rect x="1647" y="208.5" width="12" height="2"/></g><g stroke="#9a9a9a" stroke-width="1.6" fill="none"><path d="M1681 197l11-6 11 6-11 6z"/><path d="M1681 201.5l11 6 11-6"/><path d="M1681 206l11 6 11-6"/></g><rect x="1671" y="1185" width="42.5" height="82" fill="#272727" stroke="#161616" stroke-width="1.2"/><rect x="1672" y="1226" width="40.5" height="1.5" fill="#3c3c3c"/><path d="M1681 1205h21M1691.5 1194.5v21" stroke="#a5a5a5" stroke-width="1.5"/><path d="M1681 1247h21" stroke="#a5a5a5" stroke-width="2"/></svg><div class="r" style="left:536px;top:160px;width:1196px;height:1px;background:#8c8c8a;"></div><div class="r" style="left:533px;top:160px;width:3px;height:1125px;background:#262626;"></div><div class="r" style="left:1732px;top:160px;width:2px;height:1125px;background:#262626;"></div><div class="r" style="left:1746px;top:160px;width:791px;height:97px;background:#4e4d4e;"></div><div class="r" style="left:2140px;top:160px;width:1px;height:97px;background:#454545;"></div><div class="t" style="left:944px;width:2000px;text-align:center;top:164.1px;font-size:27px;color:#7dd494;font-weight:normal;letter-spacing:2.3px;text-indent:2.3px;-webkit-text-stroke:0.4px #7dd494;">Open</div><div class="t" style="left:944px;width:2000px;text-align:center;top:198.2px;font-size:54px;color:#ffffff;font-weight:bold;transform:scaleX(1.2);">6</div><div class="t" style="left:1339.5px;width:2000px;text-align:center;top:163.6px;font-size:27px;color:#d4d4d4;font-weight:normal;letter-spacing:1.3px;text-indent:1.3px;-webkit-text-stroke:0.4px #d4d4d4;">Closed</div><div class="t" style="left:1336px;width:2000px;text-align:center;top:197.2px;font-size:54px;color:#ffffff;font-weight:bold;">11</div><div class="r" style="left:1748px;top:270px;width:789px;height:138px;background:#2b2b2b;"></div><div class="r" style="left:2002px;top:270px;width:2px;height:138px;background:#363636;"></div><div class="r" style="left:2290px;top:270px;width:2px;height:138px;background:#363636;"></div><div class="t" style="left:875px;width:2000px;text-align:center;top:274.4px;font-size:34px;color:#5cc27a;font-weight:normal;letter-spacing:1.2px;text-indent:1.2px;">Low Priority</div><div class="t" style="left:875px;width:2000px;text-align:center;top:321.2px;font-size:78px;color:#e6e6e6;font-weight:normal;transform:scaleX(1.1);">0</div><div class="t" style="left:1147.5px;width:2000px;text-align:center;top:273.9px;font-size:29px;color:#f08a2c;font-weight:normal;letter-spacing:1.5px;text-indent:1.5px;">Medium Priority</div><div class="t" style="left:1146px;width:2000px;text-align:center;top:316.6px;font-size:80px;color:#e6e6e6;font-weight:normal;transform:scaleX(1.05);">5</div><div class="t" style="left:1414.5px;width:2000px;text-align:center;top:275.1px;font-size:30px;color:#e8364c;font-weight:normal;letter-spacing:1.45px;text-indent:1.45px;">High Priority</div><div class="t" style="left:1409.5px;width:2000px;text-align:center;top:319.2px;font-size:78px;color:#e6e6e6;font-weight:normal;">1</div><div class="r" style="left:1748px;top:421px;width:788px;height:559px;background:#2b2b2b;"></div><div class="t" style="left:1141.5px;width:2000px;text-align:center;top:433.6px;font-size:27px;color:#eeeeee;font-weight:normal;letter-spacing:-0.3px;"><u>Project Status by Customer</u></div><div class="r" style="left:1805px;top:500px;width:2px;height:435px;background:#555;"></div><div class="r" style="left:1796px;top:934px;width:488px;height:2px;background:#555;"></div><div class="r" style="left:1799px;top:935px;width:7px;height:1px;background:#555;"></div><div class="t" style="left:784px;width:2000px;text-align:center;top:929.2px;font-size:13px;color:#dddddd;font-weight:bold;">0</div><div class="r" style="left:1799px;top:811px;width:7px;height:1px;background:#555;"></div><div class="t" style="left:784px;width:2000px;text-align:center;top:804.8px;font-size:13px;color:#dddddd;font-weight:bold;">1</div><div class="r" style="left:1799px;top:686px;width:7px;height:1px;background:#555;"></div><div class="t" style="left:784px;width:2000px;text-align:center;top:680.4px;font-size:13px;color:#dddddd;font-weight:bold;">2</div><div class="r" style="left:1799px;top:562px;width:7px;height:1px;background:#555;"></div><div class="t" style="left:784px;width:2000px;text-align:center;top:556.0px;font-size:13px;color:#dddddd;font-weight:bold;">3</div><div class="r" style="left:1820px;top:810.6px;width:130px;height:124.4px;background:#a8a8ab"></div><div class="r" style="left:1981px;top:686.2px;width:130px;height:248.8px;background:#6dca93"></div><div class="r" style="left:2141px;top:810.6px;width:130px;height:124.4px;background:#6dca93"></div><div class="r" style="left:2141px;top:686.2px;width:130px;height:124.4px;background:#55a9c2"></div><div class="r" style="left:2141px;top:561.8px;width:130px;height:124.4px;background:#d8940f"></div><div class="r" style="left:1885px;top:935px;width:1px;height:5px;background:#555;"></div><div class="t" style="left:885px;width:2000px;text-align:center;top:953.2px;font-size:13px;color:#e6e6e6;font-weight:normal;-webkit-text-stroke:0.3px #e6e6e6;">Salem Gas</div><div class="r" style="left:2045px;top:935px;width:1px;height:5px;background:#555;"></div><div class="t" style="left:1045px;width:2000px;text-align:center;top:953.2px;font-size:13px;color:#e6e6e6;font-weight:normal;-webkit-text-stroke:0.3px #e6e6e6;">Salem Power</div><div class="r" style="left:2205px;top:935px;width:1px;height:5px;background:#555;"></div><div class="t" style="left:1205px;width:2000px;text-align:center;top:953.2px;font-size:13px;color:#e6e6e6;font-weight:normal;-webkit-text-stroke:0.3px #e6e6e6;">Salem Water</div><div class="r" style="left:2338px;top:657.2px;width:20.6px;height:20.6px;border-radius:50%;background:#d0d0d2"></div><div class="t" style="left:2364px;top:661.9px;font-size:14px;color:#e6e6e6;font-weight:normal;line-height:16.5px;letter-spacing:0.2px;-webkit-text-stroke:0.35px #e6e6e6;">As-built Submission</div><div class="r" style="left:2338px;top:692.7px;width:20.6px;height:20.6px;border-radius:50%;background:#7be3a6"></div><div class="t" style="left:2364px;top:697.4px;font-size:14px;color:#e6e6e6;font-weight:normal;line-height:16.5px;letter-spacing:0.2px;-webkit-text-stroke:0.35px #e6e6e6;">Property Rights</div><div class="r" style="left:2338px;top:728.7px;width:20.6px;height:20.6px;border-radius:50%;background:#5ec8ea"></div><div class="t" style="left:2364px;top:733.4px;font-size:14px;color:#e6e6e6;font-weight:normal;line-height:16.5px;letter-spacing:0.2px;-webkit-text-stroke:0.35px #e6e6e6;">Final Utility Design</div><div class="r" style="left:2338px;top:764.7px;width:20.6px;height:20.6px;border-radius:50%;background:#f5aa1c"></div><div class="t" style="left:2364px;top:769.4px;font-size:14px;color:#e6e6e6;font-weight:normal;line-height:16.5px;letter-spacing:0.2px;-webkit-text-stroke:0.35px #e6e6e6;">Preliminary<br>Project Plans</div><div class="r" style="left:1748px;top:996px;width:788px;height:290px;background:#2b2b2b;"></div><div class="t" style="left:1142px;width:2000px;text-align:center;top:1006.6px;font-size:27px;color:#eeeeee;font-weight:normal;"><u>Job Assignments</u></div><div class="r" style="left:1805px;top:1071px;width:2px;height:187px;background:#555;"></div><div class="r" style="left:1798px;top:1257px;width:695px;height:2px;background:#555;"></div><div class="r" style="left:1799px;top:1258px;width:7px;height:1px;background:#555;"></div><div class="t" style="left:784px;width:2000px;text-align:center;top:1251.0px;font-size:14px;color:#dddddd;font-weight:bold;">1</div><div class="r" style="left:1799px;top:1211px;width:7px;height:1px;background:#555;"></div><div class="t" style="left:784px;width:2000px;text-align:center;top:1204.4px;font-size:14px;color:#dddddd;font-weight:bold;">2</div><div class="r" style="left:1799px;top:1164px;width:7px;height:1px;background:#555;"></div><div class="t" style="left:784px;width:2000px;text-align:center;top:1157.8px;font-size:14px;color:#dddddd;font-weight:bold;">3</div><div class="r" style="left:1799px;top:1118px;width:7px;height:1px;background:#555;"></div><div class="t" style="left:784px;width:2000px;text-align:center;top:1111.2px;font-size:14px;color:#dddddd;font-weight:bold;">4</div><div class="r" style="left:1799px;top:1071px;width:7px;height:1px;background:#555;"></div><div class="t" style="left:784px;width:2000px;text-align:center;top:1064.6px;font-size:14px;color:#dddddd;font-weight:bold;">5</div><div class="r" style="left:1807px;top:1211px;width:686px;height:0;border-top:1px dotted #404040"></div><div class="r" style="left:1807px;top:1164px;width:686px;height:0;border-top:1px dotted #404040"></div><div class="r" style="left:1807px;top:1118px;width:686px;height:0;border-top:1px dotted #404040"></div><div class="r" style="left:1807px;top:1071px;width:686px;height:0;border-top:1px dotted #404040"></div><div class="r" style="left:2149px;top:1071px;width:0;height:187px;border-left:1px dotted #404040"></div><div class="r" style="left:2492px;top:1071px;width:0;height:187px;border-left:1px dotted #404040"></div><div class="r" style="left:1839px;top:1117px;width:277px;height:141px;background:#f7d80a"></div><div class="r" style="left:2183px;top:1210px;width:276px;height:48px;background:#00c3f7"></div><div class="r" style="left:1977px;top:1258px;width:1px;height:5px;background:#555;"></div><div class="r" style="left:2320px;top:1258px;width:1px;height:5px;background:#555;"></div><div class="t" style="left:977px;width:2000px;text-align:center;top:1275.2px;font-size:13px;color:#e6e6e6;font-weight:normal;">Utility</div><div class="t" style="left:1320px;width:2000px;text-align:center;top:1275.2px;font-size:13px;color:#e6e6e6;font-weight:normal;">DOT</div><div class="r" style="left:13px;top:1286px;width:2532px;height:108px;background:#2b2b2b;"></div><div class="r" style="left:2542px;top:66px;width:3px;height:1328px;background:#5a5a5a;"></div><div class="r" style="left:2544px;top:66px;width:1px;height:1328px;background:#8a8a8a;"></div><div class="r" style="left:13px;top:66px;width:1px;height:1328px;background:#7a7a7a;"></div>
</body></html>
